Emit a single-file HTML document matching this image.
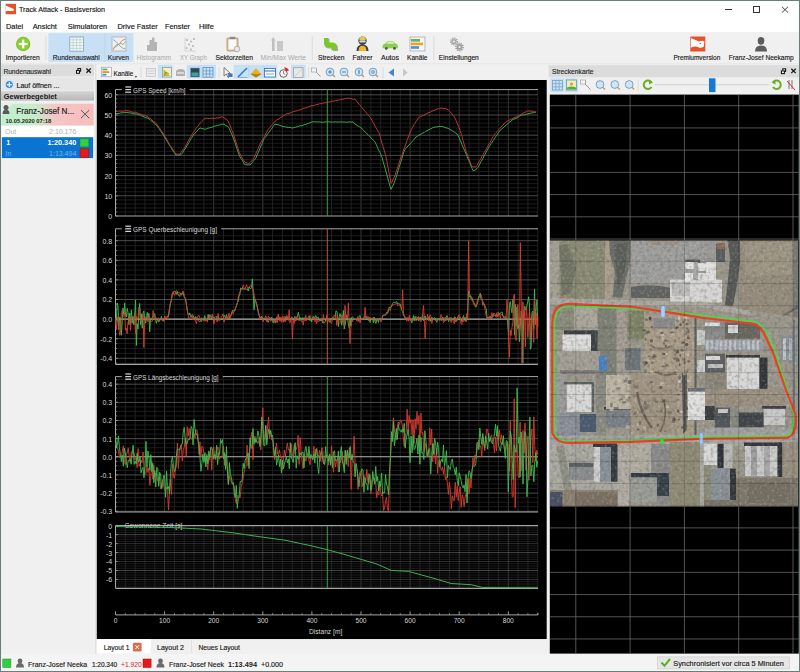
<!DOCTYPE html>
<html><head><meta charset="utf-8"><title>Track Attack</title>
<style>html,body{margin:0;padding:0;background:#f0f0f0;overflow:hidden}svg{display:block}text{font-family:"Liberation Sans",sans-serif}.dk{stroke:#1a1a1a;stroke-width:0.18px}</style>
</head><body>
<svg width="800" height="672" viewBox="0 0 800 672" font-family="Liberation Sans, sans-serif">
<rect x="0.00" y="0.00" width="800.00" height="672.00" fill="#f0f0f0" />
<rect x="0.00" y="0.00" width="800.00" height="32.30" fill="#ffffff" />
<rect x="5.6" y="3.8" width="10.4" height="10.4" fill="#ea5028"/><path d="M5.6,5.4 L12.8,8.6 Q14.6,9.3 14,10.4 Q11.5,11.3 9.2,10.9 Q7.2,10.6 5.6,11.4 Z" fill="#ffffff"/>
<text x="19.00" y="12.30" font-size="7.8" fill="#1a1a1a" textLength="86" lengthAdjust="spacingAndGlyphs" class="dk">Track Attack - Basisversion</text>
<line x1="725.00" y1="9.50" x2="732.00" y2="9.50" stroke="#333" stroke-width="1" />
<rect x="753.50" y="6.50" width="6.00" height="6.00" fill="none" stroke="#333" stroke-width="1"/>
<line x1="782.00" y1="6.80" x2="788.00" y2="12.60" stroke="#333" stroke-width="0.9" />
<line x1="788.00" y1="6.80" x2="782.00" y2="12.60" stroke="#333" stroke-width="0.9" />
<text x="6.00" y="28.80" font-size="7.4" fill="#1a1a1a" class="dk">Datei</text>
<text x="32.70" y="28.80" font-size="7.4" fill="#1a1a1a" class="dk">Ansicht</text>
<text x="67.80" y="28.80" font-size="7.4" fill="#1a1a1a" class="dk">Simulatoren</text>
<text x="117.50" y="28.80" font-size="7.4" fill="#1a1a1a" class="dk">Drive Faster</text>
<text x="165.00" y="28.80" font-size="7.4" fill="#1a1a1a" class="dk">Fenster</text>
<text x="199.00" y="28.80" font-size="7.4" fill="#1a1a1a" class="dk">Hilfe</text>
<rect x="1.00" y="32.30" width="798.00" height="31.50" fill="#f0f0f0" />
<rect x="1.00" y="63.30" width="798.00" height="1.00" fill="#e6e6e6" />
<rect x="48.40" y="33.10" width="56.20" height="28.80" fill="#c8e0f6" />
<rect x="105.20" y="33.10" width="28.20" height="28.80" fill="#c8e0f6" />
<line x1="104.90" y1="33.10" x2="104.90" y2="61.90" stroke="#a9cdef" stroke-width="0.8" />
<line x1="45.90" y1="36.00" x2="45.90" y2="60.00" stroke="#d8d8d8" stroke-width="0.8" />
<line x1="312.30" y1="36.00" x2="312.30" y2="60.00" stroke="#d8d8d8" stroke-width="0.8" />
<line x1="433.80" y1="36.00" x2="433.80" y2="60.00" stroke="#d8d8d8" stroke-width="0.8" />
<text x="5.70" y="59.8" font-size="7" fill="#1e1e1e" stroke="#1e1e1e" stroke-width="0.16" textLength="34.2" lengthAdjust="spacingAndGlyphs">Importieren</text>
<text x="52.80" y="59.8" font-size="7" fill="#1e1e1e" stroke="#1e1e1e" stroke-width="0.16" textLength="46.9" lengthAdjust="spacingAndGlyphs">Rundenauswahl</text>
<text x="107.80" y="59.8" font-size="7" fill="#1e1e1e" stroke="#1e1e1e" stroke-width="0.16" textLength="21.2" lengthAdjust="spacingAndGlyphs">Kurven</text>
<text x="136.80" y="59.8" font-size="7" fill="#a8a8a8" textLength="34.3" lengthAdjust="spacingAndGlyphs">Histogramm</text>
<text x="180.00" y="59.8" font-size="7" fill="#a8a8a8" textLength="26.8" lengthAdjust="spacingAndGlyphs">XY Graph</text>
<text x="215.50" y="59.8" font-size="7" fill="#1e1e1e" stroke="#1e1e1e" stroke-width="0.16" textLength="37.5" lengthAdjust="spacingAndGlyphs">Sektorzeiten</text>
<text x="260.50" y="59.8" font-size="7" fill="#a8a8a8" textLength="45.5" lengthAdjust="spacingAndGlyphs">Min/Max Werte</text>
<text x="318.00" y="59.8" font-size="7" fill="#1e1e1e" stroke="#1e1e1e" stroke-width="0.16" textLength="26.5" lengthAdjust="spacingAndGlyphs">Strecken</text>
<text x="352.50" y="59.8" font-size="7" fill="#1e1e1e" stroke="#1e1e1e" stroke-width="0.16" textLength="20.0" lengthAdjust="spacingAndGlyphs">Fahrer</text>
<text x="381.00" y="59.8" font-size="7" fill="#1e1e1e" stroke="#1e1e1e" stroke-width="0.16" textLength="18.0" lengthAdjust="spacingAndGlyphs">Autos</text>
<text x="407.00" y="59.8" font-size="7" fill="#1e1e1e" stroke="#1e1e1e" stroke-width="0.16" textLength="20.5" lengthAdjust="spacingAndGlyphs">Kanäle</text>
<text x="438.80" y="59.8" font-size="7" fill="#1e1e1e" stroke="#1e1e1e" stroke-width="0.16" textLength="40.0" lengthAdjust="spacingAndGlyphs">Einstellungen</text>
<text x="673.40" y="59.8" font-size="7" fill="#1e1e1e" stroke="#1e1e1e" stroke-width="0.16" textLength="46.9" lengthAdjust="spacingAndGlyphs">Premiumversion</text>
<text x="728.80" y="59.8" font-size="7" fill="#1e1e1e" stroke="#1e1e1e" stroke-width="0.16" textLength="64.8" lengthAdjust="spacingAndGlyphs">Franz-Josef Neekamp</text>
<circle cx="23.2" cy="44" r="7.2" fill="#7cbf2a"/><circle cx="23.2" cy="44" r="6.2" fill="#8ccc35"/>
<rect x="22.1" y="39.6" width="2.2" height="8.8" fill="#fff"/><rect x="18.8" y="42.9" width="8.8" height="2.2" fill="#fff"/>
<rect x="69.8" y="37" width="13.6" height="14.2" fill="#f4f8fb" stroke="#7f9fb8" stroke-width="0.8"/>
<line x1="69.80" y1="39.84" x2="83.40" y2="39.84" stroke="#9fc2a0" stroke-width="0.5" />
<line x1="69.80" y1="42.68" x2="83.40" y2="42.68" stroke="#9fc2a0" stroke-width="0.5" />
<line x1="69.80" y1="45.52" x2="83.40" y2="45.52" stroke="#9fc2a0" stroke-width="0.5" />
<line x1="69.80" y1="48.36" x2="83.40" y2="48.36" stroke="#9fc2a0" stroke-width="0.5" />
<line x1="73.20" y1="37.00" x2="73.20" y2="51.20" stroke="#9fb8c8" stroke-width="0.5" />
<line x1="76.60" y1="37.00" x2="76.60" y2="51.20" stroke="#9fb8c8" stroke-width="0.5" />
<line x1="80.00" y1="37.00" x2="80.00" y2="51.20" stroke="#9fb8c8" stroke-width="0.5" />
<rect x="112" y="37" width="14" height="14" fill="#f2eeee" stroke="#a8b0b8" stroke-width="0.8"/>
<polyline points="112.8,50 116,45 119,44.5 122,40.5 125.5,39" fill="none" stroke="#e07a6a" stroke-width="0.9"/>
<polyline points="113,39.5 116.5,42 119.5,45.5 122.5,48 125.5,49" fill="none" stroke="#6a9ad0" stroke-width="0.8"/>
<polyline points="113,48.5 117,46 120,43 123,44.5 125.5,41.5" fill="none" stroke="#70b868" stroke-width="0.8"/>
<path d="M147,51 V45 H149.5 V40 H152 V37.5 H154.5 V42 H157 V51 Z" fill="#b4b4b4"/>
<rect x="186.1" y="39.1" width="1.8" height="1.8" fill="#b8b8b8"/>
<rect x="190.1" y="40.6" width="1.8" height="1.8" fill="#b8b8b8"/>
<rect x="188.1" y="43.6" width="1.8" height="1.8" fill="#b8b8b8"/>
<rect x="192.1" y="45.1" width="1.8" height="1.8" fill="#b8b8b8"/>
<rect x="185.6" y="47.1" width="1.8" height="1.8" fill="#b8b8b8"/>
<rect x="190.1" y="48.6" width="1.8" height="1.8" fill="#b8b8b8"/>
<rect x="193.1" y="38.1" width="1.8" height="1.8" fill="#b8b8b8"/>
<path d="M185,37.5 V51 H196" fill="none" stroke="#c8c8c8" stroke-width="0.7"/>
<rect x="227" y="38" width="11" height="13" rx="1" fill="#d8c0a0" stroke="#a88860" stroke-width="0.7"/>
<rect x="228.5" y="39.5" width="8" height="10" fill="#f8f8f8"/>
<rect x="229.8" y="36.8" width="5.4" height="2.2" fill="#8a8a8a"/>
<circle cx="237" cy="49" r="2.8" fill="#e8e8e8" stroke="#9a9a9a" stroke-width="0.7"/>
<path d="M272,51 V40 L270,42 L273.3,37 L276.5,42 L274.6,40 V51 Z" fill="#c0c0c0"/><rect x="277" y="41" width="6" height="10" fill="#c8c8c8"/>
<path d="M325,39 h4.5 v4.5 h3.5 q5,0 5,5 v2.5 h-5.5 v-2.5 h-3 q-4.5,0 -4.5,-4.5 z" fill="#8a8a8a" opacity="0.7"/>
<path d="M324,38 h4.5 v4.5 h3.5 q5,0 5,5 v2.5 h-5.5 v-2.5 h-3 q-4.5,0 -4.5,-4.5 z" fill="#78c828"/>
<path d="M356.5,51 q0,-6.5 6,-6.5 q6,0 6,6.5 z" fill="#3e3e3e"/><path d="M358.6,51 q0,-5.2 3.9,-5.2 q3.9,0 3.9,5.2 z" fill="#e8b830"/>
<circle cx="362.5" cy="40.8" r="4.2" fill="#404040"/><path d="M359.2,40 q0,-3.4 3.3,-3.6 q3.3,0.2 3.3,3.6 z" fill="#f0c848"/><rect x="359.3" y="40.2" width="6.4" height="2.4" rx="1" fill="#c8d8f0"/>
<path d="M382.5,46.5 q0,-2.5 2.5,-2.7 l2.5,-2.6 h5.5 l2.8,2.6 q2.2,0.3 2.2,2.7 v1.8 h-15.5 z" fill="#8ccc50"/>
<path d="M388,41.7 h4.8 l2,2 h-8.6 z" fill="#d8f0c0"/>
<circle cx="386.3" cy="48.4" r="1.4" fill="#555"/><circle cx="394.5" cy="48.4" r="1.4" fill="#555"/>
<rect x="410" y="37" width="15" height="14" fill="#f4f4f4" stroke="#9aa0a8" stroke-width="0.7"/>
<rect x="411" y="39" width="9" height="2.6" fill="#70b050"/><rect x="411" y="42.6" width="12" height="2.6" fill="#f0a030"/><rect x="411" y="46.2" width="8" height="2.6" fill="#4a90d0"/>
<circle cx="454" cy="41.5" r="3.3" fill="none" stroke="#a4a4a4" stroke-width="1.6" stroke-dasharray="1.3,0.9"/><circle cx="454" cy="41.5" r="2.6" fill="#a8a8a8"/><circle cx="454" cy="41.5" r="1" fill="#f0f0f0"/>
<circle cx="459.5" cy="47" r="3.6" fill="none" stroke="#9c9c9c" stroke-width="1.6" stroke-dasharray="1.3,0.9"/><circle cx="459.5" cy="47" r="2.9" fill="#a0a0a0"/><circle cx="459.5" cy="47" r="1.1" fill="#f0f0f0"/>
<rect x="690.3" y="36.5" width="15" height="15" fill="#e8522a"/>
<path d="M690.9,37.9 L699,41.5 Q702,40 704.4,41.2 L703.7,46.8 Q701,48.5 699,47.5 Q696,45.8 693,46.8 L690.9,47.8 Z" fill="#fff"/><circle cx="700.2" cy="43.4" r="0.7" fill="#6a5a7a"/>
<ellipse cx="761" cy="40.8" rx="3.3" ry="3.9" fill="#5c5c5c"/><path d="M755,51.5 q0,-6 6,-6 q6,0 6,6 z" fill="#5c5c5c"/>
<rect x="1.00" y="64.50" width="93.00" height="12.00" fill="#dcdcdc" />
<text x="3.40" y="74.00" font-size="6.8" fill="#2a2a2a" stroke="#2a2a2a" stroke-width="0.16" textLength="47.6" lengthAdjust="spacingAndGlyphs">Rundenauswahl</text>
<path d="M77.9,70.3 V68.5 H80.6 V71.2 H79.4" fill="none" stroke="#1a1a1a" stroke-width="1.1"/><rect x="76.5" y="70.6" width="3" height="2.7" fill="#fff" stroke="#1a1a1a" stroke-width="1.1"/>
<line x1="86.40" y1="68.50" x2="90.80" y2="72.80" stroke="#1a1a1a" stroke-width="1.3" />
<line x1="90.80" y1="68.50" x2="86.40" y2="72.80" stroke="#1a1a1a" stroke-width="1.3" />
<rect x="1.50" y="77.50" width="92.00" height="13.00" fill="#e6e6e6" />
<circle cx="9.3" cy="84.6" r="4.6" fill="#cfe8fb"/><circle cx="9.3" cy="84.6" r="3.5" fill="#3f8fd6"/>
<rect x="8.7" y="82.2" width="1.3" height="4.8" fill="#e8f4ff"/><rect x="6.9" y="84" width="4.8" height="1.3" fill="#e8f4ff"/>
<text x="16.50" y="88.30" font-size="7" fill="#1a1a1a" stroke="#1a1a1a" stroke-width="0.16" textLength="43" lengthAdjust="spacingAndGlyphs">Lauf öffnen ...</text>
<defs><linearGradient id="gg" x1="0" y1="0" x2="0" y2="1"><stop offset="0" stop-color="#d4d4d4"/><stop offset="1" stop-color="#b8b8b8"/></linearGradient><linearGradient id="card" x1="0" y1="0" x2="1" y2="0"><stop offset="0" stop-color="#c0efcf"/><stop offset="0.36" stop-color="#c8eccc"/><stop offset="0.58" stop-color="#f5c6c6"/><stop offset="1" stop-color="#f6bcbc"/></linearGradient></defs>
<rect x="1.00" y="91.20" width="93.00" height="9.40" fill="url(#gg)" />
<text x="3.80" y="98.80" font-size="7" font-weight="bold" fill="#1a1a1a" textLength="53" lengthAdjust="spacingAndGlyphs">Gewerbegebiet</text>
<rect x="1.50" y="103.70" width="92.20" height="22.00" fill="url(#card)" />
<path d="M1.5,103.7 H12.8 L1.5,115.5 Z" fill="#ececec"/>
<circle cx="6" cy="107.6" r="2.5" fill="#5a5a5a"/><path d="M2.5,114 q0,-4.5 3.5,-4.5 q3.5,0 3.5,4.5 z" fill="#5a5a5a"/>
<text x="16.30" y="113.80" font-size="8.6" fill="#1a1a1a" stroke="#1a1a1a" stroke-width="0.16" textLength="58" lengthAdjust="spacingAndGlyphs">Franz-Josef N...</text>
<text x="5.60" y="122.80" font-size="6" font-weight="bold" fill="#1a2a10" textLength="45.6" lengthAdjust="spacingAndGlyphs">10.05.2020 07:18</text>
<line x1="81.00" y1="110.20" x2="89.20" y2="118.20" stroke="#444" stroke-width="0.9" />
<line x1="89.20" y1="110.20" x2="81.00" y2="118.20" stroke="#444" stroke-width="0.9" />
<rect x="1.50" y="125.70" width="92.00" height="11.50" fill="#ffffff" />
<text x="5.00" y="134.40" font-size="7" fill="#b0b0b0" >Out</text>
<text x="76.30" y="134.40" font-size="7" text-anchor="end" fill="#b0b0b0" >2:10.176</text>
<rect x="1.90" y="137.20" width="91.20" height="20.90" fill="#0a74d0" />
<text x="6.20" y="145.00" font-size="7.2" font-weight="bold" fill="#ffffff" >1</text>
<text x="76.30" y="145.00" font-size="7.3" font-weight="bold" text-anchor="end" fill="#ffffff" >1:20.340</text>
<text x="5.60" y="155.60" font-size="7" fill="#7ab4e8" >In</text>
<text x="76.30" y="155.60" font-size="7" text-anchor="end" fill="#7ab4e8" >1:13.494</text>
<rect x="80.00" y="138.80" width="8.80" height="8.10" fill="#30d040" stroke="#1a8a20" stroke-width="0.5"/>
<rect x="80.00" y="148.80" width="8.80" height="8.70" fill="#e81818" stroke="#901010" stroke-width="0.5"/>
<line x1="95.80" y1="64.00" x2="95.80" y2="654.00" stroke="#d8d8d8" stroke-width="0.8" />
<rect x="96.50" y="64.50" width="451.00" height="15.50" fill="#f0f0f0" />
<rect x="158.00" y="64.80" width="14.60" height="13.50" fill="#c6e0f6" />
<rect x="186.70" y="64.80" width="29.20" height="13.50" fill="#c6e0f6" />
<rect x="233.60" y="64.80" width="43.40" height="13.50" fill="#c6e0f6" />
<rect x="291.00" y="64.80" width="14.60" height="13.50" fill="#c6e0f6" />
<line x1="201.20" y1="65.00" x2="201.20" y2="78.00" stroke="#b4d4f0" stroke-width="0.6" />
<line x1="248.50" y1="65.00" x2="248.50" y2="78.00" stroke="#b4d4f0" stroke-width="0.6" />
<line x1="263.50" y1="65.00" x2="263.50" y2="78.00" stroke="#b4d4f0" stroke-width="0.6" />
<line x1="141.00" y1="67.00" x2="141.00" y2="78.00" stroke="#d6d6d6" stroke-width="0.8" />
<line x1="219.00" y1="67.00" x2="219.00" y2="78.00" stroke="#d6d6d6" stroke-width="0.8" />
<line x1="308.60" y1="67.00" x2="308.60" y2="78.00" stroke="#d6d6d6" stroke-width="0.8" />
<line x1="383.00" y1="67.00" x2="383.00" y2="78.00" stroke="#d6d6d6" stroke-width="0.8" />
<rect x="101.5" y="67.2" width="10" height="9.6" fill="#f8f8f8" stroke="#8a96a0" stroke-width="0.6"/>
<rect x="102.4" y="68.6" width="5" height="1.8" fill="#68b048"/><rect x="102.4" y="71.2" width="6.8" height="1.8" fill="#e89030"/><rect x="102.4" y="73.8" width="4" height="1.8" fill="#4a90d0"/>
<text x="113.60" y="75.80" font-size="7" fill="#1e1e1e" stroke="#1e1e1e" stroke-width="0.16" textLength="19.6" lengthAdjust="spacingAndGlyphs">Kanäle</text>
<path d="M134.6,76.2 h2.6 l-1.3,1.5 z" fill="#222"/>
<rect x="146.5" y="68.5" width="9" height="8" fill="#eaeaea" stroke="#b8b8b8" stroke-width="0.6"/><line x1="148" y1="71" x2="154" y2="71" stroke="#c0c0c0" stroke-width="0.6"/><line x1="148" y1="73.5" x2="154" y2="73.5" stroke="#c0c0c0" stroke-width="0.6"/>
<rect x="162.5" y="67.5" width="9" height="9.5" fill="#f4f0c0" stroke="#6a8aa0" stroke-width="0.6"/><path d="M163.5,76 V69 L170,76 Z" fill="#d8b820"/><path d="M164,76 L166,72 L169,74" fill="none" stroke="#308030" stroke-width="0.6"/>
<path d="M176,76 v-4 q0,-3 4.5,-3 q4.5,0 4.5,3 v4 z" fill="#b0b0b0"/><rect x="177" y="72" width="7" height="2" fill="#d8d8d8"/>
<rect x="190.5" y="68" width="9" height="9" fill="#2a4a5a" stroke="#7a9ab0" stroke-width="0.6"/><rect x="191.5" y="72.5" width="7" height="3.5" fill="#40a0a0"/>
<rect x="203" y="67.6" width="10" height="9.6" fill="none" stroke="#5a8ab8" stroke-width="0.7"/>
<line x1="206.33" y1="67.60" x2="206.33" y2="77.20" stroke="#5a8ab8" stroke-width="0.6" />
<line x1="203.00" y1="70.80" x2="213.00" y2="70.80" stroke="#5a8ab8" stroke-width="0.6" />
<line x1="209.66" y1="67.60" x2="209.66" y2="77.20" stroke="#5a8ab8" stroke-width="0.6" />
<line x1="203.00" y1="74.00" x2="213.00" y2="74.00" stroke="#5a8ab8" stroke-width="0.6" />
<path d="M224,67.5 L224,76 L226.3,74 L228,77.5 L229.3,77 L227.8,73.5 L230.5,73.5 Z" fill="#f0f0f0" stroke="#333" stroke-width="0.6"/><rect x="228.5" y="73.5" width="4" height="3.5" fill="#3a78c0"/>
<path d="M238,77 L247,68" stroke="#2a78d0" stroke-width="1.4"/><path d="M237.5,77.5 h10" stroke="#6aa0d8" stroke-width="0.7"/>
<path d="M250.5,74 L256,68.2 L261.5,74 L256,77.5 Z" fill="#e8b020"/><path d="M250.5,74 L256,77.5 L261.5,74" fill="#b88010"/>
<rect x="264.5" y="68.5" width="11" height="8.5" fill="#ffffff" stroke="#2a68b8" stroke-width="0.8"/><line x1="264.5" y1="71" x2="275.5" y2="71" stroke="#2a68b8" stroke-width="1"/><line x1="266" y1="74" x2="274" y2="74" stroke="#2a68b8" stroke-width="0.6"/>
<circle cx="283.5" cy="73.5" r="3.8" fill="#f4f4f4" stroke="#444" stroke-width="0.8"/><path d="M283.5,71 V73.5 L285.5,74.5" fill="none" stroke="#444" stroke-width="0.6"/><path d="M284,67.5 q3.5,-0.5 5,3 l-3,1 z" fill="#d83030"/>
<rect x="293.5" y="67.8" width="9.5" height="9.5" fill="#e8e8e8" stroke="#8a8a8a" stroke-width="0.6"/><path d="M294.5,76.5 L302,69" stroke="#bbb" stroke-width="0.6"/>
<path d="M312,68.5 h4.5 v4 l4,4" fill="none" stroke="#777" stroke-width="0.7"/><rect x="311.5" y="68" width="5" height="4" fill="#f4f4f4" stroke="#888" stroke-width="0.5"/>
<circle cx="330" cy="72" r="3.9" fill="#cfe6f8" stroke="#4a84b8" stroke-width="0.7"/><path d="M332.6,74.6 l2.4,2.4" stroke="#d89030" stroke-width="1.3"/>
<path d="M328,72 h4 M330,70 v4" stroke="#2a5a90" stroke-width="0.7"/>
<circle cx="344" cy="72" r="3.9" fill="#cfe6f8" stroke="#4a84b8" stroke-width="0.7"/><path d="M346.6,74.6 l2.4,2.4" stroke="#d89030" stroke-width="1.3"/>
<path d="M342,72 h4" stroke="#2a5a90" stroke-width="0.7"/>
<circle cx="359" cy="72" r="3.9" fill="#cfe6f8" stroke="#4a84b8" stroke-width="0.7"/><path d="M361.6,74.6 l2.4,2.4" stroke="#d89030" stroke-width="1.3"/>
<path d="M359,69.8 v4.4" stroke="#2a5a90" stroke-width="0.9"/>
<circle cx="373" cy="72" r="3.9" fill="#cfe6f8" stroke="#4a84b8" stroke-width="0.7"/><path d="M375.6,74.6 l2.4,2.4" stroke="#d89030" stroke-width="1.3"/>
<circle cx="373" cy="72" r="1.4" fill="none" stroke="#2a5a90" stroke-width="0.6"/>
<path d="M394,68.5 v8 l-5.5,-4 z" fill="#3a88d8"/><path d="M403,68.5 v8 l4.8,-4 z" fill="#c8c8c8"/>
<rect x="96.80" y="80.00" width="449.90" height="559.20" fill="#000000" />
<line x1="125.32" y1="89.60" x2="125.32" y2="216.00" stroke="#2e2e2e" stroke-width="0.7" />
<line x1="135.14" y1="89.60" x2="135.14" y2="216.00" stroke="#2e2e2e" stroke-width="0.7" />
<line x1="144.96" y1="89.60" x2="144.96" y2="216.00" stroke="#2e2e2e" stroke-width="0.7" />
<line x1="154.78" y1="89.60" x2="154.78" y2="216.00" stroke="#2e2e2e" stroke-width="0.7" />
<line x1="164.60" y1="89.60" x2="164.60" y2="216.00" stroke="#484848" stroke-width="0.8" />
<line x1="174.42" y1="89.60" x2="174.42" y2="216.00" stroke="#2e2e2e" stroke-width="0.7" />
<line x1="184.24" y1="89.60" x2="184.24" y2="216.00" stroke="#2e2e2e" stroke-width="0.7" />
<line x1="194.06" y1="89.60" x2="194.06" y2="216.00" stroke="#2e2e2e" stroke-width="0.7" />
<line x1="203.88" y1="89.60" x2="203.88" y2="216.00" stroke="#2e2e2e" stroke-width="0.7" />
<line x1="213.70" y1="89.60" x2="213.70" y2="216.00" stroke="#484848" stroke-width="0.8" />
<line x1="223.52" y1="89.60" x2="223.52" y2="216.00" stroke="#2e2e2e" stroke-width="0.7" />
<line x1="233.34" y1="89.60" x2="233.34" y2="216.00" stroke="#2e2e2e" stroke-width="0.7" />
<line x1="243.16" y1="89.60" x2="243.16" y2="216.00" stroke="#2e2e2e" stroke-width="0.7" />
<line x1="252.98" y1="89.60" x2="252.98" y2="216.00" stroke="#2e2e2e" stroke-width="0.7" />
<line x1="262.80" y1="89.60" x2="262.80" y2="216.00" stroke="#484848" stroke-width="0.8" />
<line x1="272.62" y1="89.60" x2="272.62" y2="216.00" stroke="#2e2e2e" stroke-width="0.7" />
<line x1="282.44" y1="89.60" x2="282.44" y2="216.00" stroke="#2e2e2e" stroke-width="0.7" />
<line x1="292.26" y1="89.60" x2="292.26" y2="216.00" stroke="#2e2e2e" stroke-width="0.7" />
<line x1="302.08" y1="89.60" x2="302.08" y2="216.00" stroke="#2e2e2e" stroke-width="0.7" />
<line x1="311.90" y1="89.60" x2="311.90" y2="216.00" stroke="#484848" stroke-width="0.8" />
<line x1="321.72" y1="89.60" x2="321.72" y2="216.00" stroke="#2e2e2e" stroke-width="0.7" />
<line x1="331.54" y1="89.60" x2="331.54" y2="216.00" stroke="#2e2e2e" stroke-width="0.7" />
<line x1="341.36" y1="89.60" x2="341.36" y2="216.00" stroke="#2e2e2e" stroke-width="0.7" />
<line x1="351.18" y1="89.60" x2="351.18" y2="216.00" stroke="#2e2e2e" stroke-width="0.7" />
<line x1="361.00" y1="89.60" x2="361.00" y2="216.00" stroke="#484848" stroke-width="0.8" />
<line x1="370.82" y1="89.60" x2="370.82" y2="216.00" stroke="#2e2e2e" stroke-width="0.7" />
<line x1="380.64" y1="89.60" x2="380.64" y2="216.00" stroke="#2e2e2e" stroke-width="0.7" />
<line x1="390.46" y1="89.60" x2="390.46" y2="216.00" stroke="#2e2e2e" stroke-width="0.7" />
<line x1="400.28" y1="89.60" x2="400.28" y2="216.00" stroke="#2e2e2e" stroke-width="0.7" />
<line x1="410.10" y1="89.60" x2="410.10" y2="216.00" stroke="#484848" stroke-width="0.8" />
<line x1="419.92" y1="89.60" x2="419.92" y2="216.00" stroke="#2e2e2e" stroke-width="0.7" />
<line x1="429.74" y1="89.60" x2="429.74" y2="216.00" stroke="#2e2e2e" stroke-width="0.7" />
<line x1="439.56" y1="89.60" x2="439.56" y2="216.00" stroke="#2e2e2e" stroke-width="0.7" />
<line x1="449.38" y1="89.60" x2="449.38" y2="216.00" stroke="#2e2e2e" stroke-width="0.7" />
<line x1="459.20" y1="89.60" x2="459.20" y2="216.00" stroke="#484848" stroke-width="0.8" />
<line x1="469.02" y1="89.60" x2="469.02" y2="216.00" stroke="#2e2e2e" stroke-width="0.7" />
<line x1="478.84" y1="89.60" x2="478.84" y2="216.00" stroke="#2e2e2e" stroke-width="0.7" />
<line x1="488.66" y1="89.60" x2="488.66" y2="216.00" stroke="#2e2e2e" stroke-width="0.7" />
<line x1="498.48" y1="89.60" x2="498.48" y2="216.00" stroke="#2e2e2e" stroke-width="0.7" />
<line x1="508.30" y1="89.60" x2="508.30" y2="216.00" stroke="#484848" stroke-width="0.8" />
<line x1="518.12" y1="89.60" x2="518.12" y2="216.00" stroke="#2e2e2e" stroke-width="0.7" />
<line x1="527.94" y1="89.60" x2="527.94" y2="216.00" stroke="#2e2e2e" stroke-width="0.7" />
<line x1="537.76" y1="89.60" x2="537.76" y2="216.00" stroke="#2e2e2e" stroke-width="0.7" />
<line x1="115.50" y1="211.96" x2="538.00" y2="211.96" stroke="#282828" stroke-width="0.7" />
<line x1="115.50" y1="207.92" x2="538.00" y2="207.92" stroke="#282828" stroke-width="0.7" />
<line x1="115.50" y1="203.88" x2="538.00" y2="203.88" stroke="#282828" stroke-width="0.7" />
<line x1="115.50" y1="199.84" x2="538.00" y2="199.84" stroke="#282828" stroke-width="0.7" />
<line x1="115.50" y1="191.76" x2="538.00" y2="191.76" stroke="#282828" stroke-width="0.7" />
<line x1="115.50" y1="187.72" x2="538.00" y2="187.72" stroke="#282828" stroke-width="0.7" />
<line x1="115.50" y1="183.68" x2="538.00" y2="183.68" stroke="#282828" stroke-width="0.7" />
<line x1="115.50" y1="179.64" x2="538.00" y2="179.64" stroke="#282828" stroke-width="0.7" />
<line x1="115.50" y1="171.56" x2="538.00" y2="171.56" stroke="#282828" stroke-width="0.7" />
<line x1="115.50" y1="167.52" x2="538.00" y2="167.52" stroke="#282828" stroke-width="0.7" />
<line x1="115.50" y1="163.48" x2="538.00" y2="163.48" stroke="#282828" stroke-width="0.7" />
<line x1="115.50" y1="159.44" x2="538.00" y2="159.44" stroke="#282828" stroke-width="0.7" />
<line x1="115.50" y1="151.36" x2="538.00" y2="151.36" stroke="#282828" stroke-width="0.7" />
<line x1="115.50" y1="147.32" x2="538.00" y2="147.32" stroke="#282828" stroke-width="0.7" />
<line x1="115.50" y1="143.28" x2="538.00" y2="143.28" stroke="#282828" stroke-width="0.7" />
<line x1="115.50" y1="139.24" x2="538.00" y2="139.24" stroke="#282828" stroke-width="0.7" />
<line x1="115.50" y1="131.16" x2="538.00" y2="131.16" stroke="#282828" stroke-width="0.7" />
<line x1="115.50" y1="127.12" x2="538.00" y2="127.12" stroke="#282828" stroke-width="0.7" />
<line x1="115.50" y1="123.08" x2="538.00" y2="123.08" stroke="#282828" stroke-width="0.7" />
<line x1="115.50" y1="119.04" x2="538.00" y2="119.04" stroke="#282828" stroke-width="0.7" />
<line x1="115.50" y1="110.96" x2="538.00" y2="110.96" stroke="#282828" stroke-width="0.7" />
<line x1="115.50" y1="106.92" x2="538.00" y2="106.92" stroke="#282828" stroke-width="0.7" />
<line x1="115.50" y1="102.88" x2="538.00" y2="102.88" stroke="#282828" stroke-width="0.7" />
<line x1="115.50" y1="98.84" x2="538.00" y2="98.84" stroke="#282828" stroke-width="0.7" />
<line x1="115.50" y1="195.80" x2="538.00" y2="195.80" stroke="#606060" stroke-width="0.8" />
<line x1="115.50" y1="175.60" x2="538.00" y2="175.60" stroke="#606060" stroke-width="0.8" />
<line x1="115.50" y1="155.40" x2="538.00" y2="155.40" stroke="#606060" stroke-width="0.8" />
<line x1="115.50" y1="135.20" x2="538.00" y2="135.20" stroke="#606060" stroke-width="0.8" />
<line x1="115.50" y1="115.00" x2="538.00" y2="115.00" stroke="#606060" stroke-width="0.8" />
<line x1="115.50" y1="94.80" x2="538.00" y2="94.80" stroke="#606060" stroke-width="0.8" />
<text x="112.20" y="218.90" font-size="7" text-anchor="end" fill="#d8d8d8" >0</text>
<line x1="115.50" y1="216.00" x2="117.70" y2="216.00" stroke="#a8a8a8" stroke-width="0.8" />
<text x="112.20" y="198.70" font-size="7" text-anchor="end" fill="#d8d8d8" >10</text>
<line x1="115.50" y1="195.80" x2="117.70" y2="195.80" stroke="#a8a8a8" stroke-width="0.8" />
<text x="112.20" y="178.50" font-size="7" text-anchor="end" fill="#d8d8d8" >20</text>
<line x1="115.50" y1="175.60" x2="117.70" y2="175.60" stroke="#a8a8a8" stroke-width="0.8" />
<text x="112.20" y="158.30" font-size="7" text-anchor="end" fill="#d8d8d8" >30</text>
<line x1="115.50" y1="155.40" x2="117.70" y2="155.40" stroke="#a8a8a8" stroke-width="0.8" />
<text x="112.20" y="138.10" font-size="7" text-anchor="end" fill="#d8d8d8" >40</text>
<line x1="115.50" y1="135.20" x2="117.70" y2="135.20" stroke="#a8a8a8" stroke-width="0.8" />
<text x="112.20" y="117.90" font-size="7" text-anchor="end" fill="#d8d8d8" >50</text>
<line x1="115.50" y1="115.00" x2="117.70" y2="115.00" stroke="#a8a8a8" stroke-width="0.8" />
<text x="112.20" y="97.70" font-size="7" text-anchor="end" fill="#d8d8d8" >60</text>
<line x1="115.50" y1="94.80" x2="117.70" y2="94.80" stroke="#a8a8a8" stroke-width="0.8" />
<line x1="115.50" y1="211.96" x2="117.00" y2="211.96" stroke="#a8a8a8" stroke-width="0.6" />
<line x1="115.50" y1="207.92" x2="117.00" y2="207.92" stroke="#a8a8a8" stroke-width="0.6" />
<line x1="115.50" y1="203.88" x2="117.00" y2="203.88" stroke="#a8a8a8" stroke-width="0.6" />
<line x1="115.50" y1="199.84" x2="117.00" y2="199.84" stroke="#a8a8a8" stroke-width="0.6" />
<line x1="115.50" y1="191.76" x2="117.00" y2="191.76" stroke="#a8a8a8" stroke-width="0.6" />
<line x1="115.50" y1="187.72" x2="117.00" y2="187.72" stroke="#a8a8a8" stroke-width="0.6" />
<line x1="115.50" y1="183.68" x2="117.00" y2="183.68" stroke="#a8a8a8" stroke-width="0.6" />
<line x1="115.50" y1="179.64" x2="117.00" y2="179.64" stroke="#a8a8a8" stroke-width="0.6" />
<line x1="115.50" y1="171.56" x2="117.00" y2="171.56" stroke="#a8a8a8" stroke-width="0.6" />
<line x1="115.50" y1="167.52" x2="117.00" y2="167.52" stroke="#a8a8a8" stroke-width="0.6" />
<line x1="115.50" y1="163.48" x2="117.00" y2="163.48" stroke="#a8a8a8" stroke-width="0.6" />
<line x1="115.50" y1="159.44" x2="117.00" y2="159.44" stroke="#a8a8a8" stroke-width="0.6" />
<line x1="115.50" y1="151.36" x2="117.00" y2="151.36" stroke="#a8a8a8" stroke-width="0.6" />
<line x1="115.50" y1="147.32" x2="117.00" y2="147.32" stroke="#a8a8a8" stroke-width="0.6" />
<line x1="115.50" y1="143.28" x2="117.00" y2="143.28" stroke="#a8a8a8" stroke-width="0.6" />
<line x1="115.50" y1="139.24" x2="117.00" y2="139.24" stroke="#a8a8a8" stroke-width="0.6" />
<line x1="115.50" y1="131.16" x2="117.00" y2="131.16" stroke="#a8a8a8" stroke-width="0.6" />
<line x1="115.50" y1="127.12" x2="117.00" y2="127.12" stroke="#a8a8a8" stroke-width="0.6" />
<line x1="115.50" y1="123.08" x2="117.00" y2="123.08" stroke="#a8a8a8" stroke-width="0.6" />
<line x1="115.50" y1="119.04" x2="117.00" y2="119.04" stroke="#a8a8a8" stroke-width="0.6" />
<line x1="115.50" y1="110.96" x2="117.00" y2="110.96" stroke="#a8a8a8" stroke-width="0.6" />
<line x1="115.50" y1="106.92" x2="117.00" y2="106.92" stroke="#a8a8a8" stroke-width="0.6" />
<line x1="115.50" y1="102.88" x2="117.00" y2="102.88" stroke="#a8a8a8" stroke-width="0.6" />
<line x1="115.50" y1="98.84" x2="117.00" y2="98.84" stroke="#a8a8a8" stroke-width="0.6" />
<line x1="115.50" y1="89.60" x2="115.50" y2="216.00" stroke="#a8a8a8" stroke-width="1" />
<line x1="115.50" y1="216.00" x2="538.00" y2="216.00" stroke="#a8a8a8" stroke-width="1.2" />
<line x1="115.50" y1="89.60" x2="121.80" y2="89.60" stroke="#a8a8a8" stroke-width="1" />
<line x1="189.70" y1="89.60" x2="538.00" y2="89.60" stroke="#a8a8a8" stroke-width="1" />
<rect x="125.30" y="86.40" width="5.80" height="1.20" fill="#d8d8d8" />
<rect x="125.30" y="89.00" width="5.80" height="1.20" fill="#d8d8d8" />
<rect x="125.30" y="91.60" width="5.80" height="1.20" fill="#d8d8d8" />
<text x="133.00" y="92.50" font-size="6.8" fill="#d8d8d8" textLength="52.5" lengthAdjust="spacingAndGlyphs">GPS Speed [km/h]</text>
<line x1="125.32" y1="228.80" x2="125.32" y2="364.30" stroke="#2e2e2e" stroke-width="0.7" />
<line x1="135.14" y1="228.80" x2="135.14" y2="364.30" stroke="#2e2e2e" stroke-width="0.7" />
<line x1="144.96" y1="228.80" x2="144.96" y2="364.30" stroke="#2e2e2e" stroke-width="0.7" />
<line x1="154.78" y1="228.80" x2="154.78" y2="364.30" stroke="#2e2e2e" stroke-width="0.7" />
<line x1="164.60" y1="228.80" x2="164.60" y2="364.30" stroke="#484848" stroke-width="0.8" />
<line x1="174.42" y1="228.80" x2="174.42" y2="364.30" stroke="#2e2e2e" stroke-width="0.7" />
<line x1="184.24" y1="228.80" x2="184.24" y2="364.30" stroke="#2e2e2e" stroke-width="0.7" />
<line x1="194.06" y1="228.80" x2="194.06" y2="364.30" stroke="#2e2e2e" stroke-width="0.7" />
<line x1="203.88" y1="228.80" x2="203.88" y2="364.30" stroke="#2e2e2e" stroke-width="0.7" />
<line x1="213.70" y1="228.80" x2="213.70" y2="364.30" stroke="#484848" stroke-width="0.8" />
<line x1="223.52" y1="228.80" x2="223.52" y2="364.30" stroke="#2e2e2e" stroke-width="0.7" />
<line x1="233.34" y1="228.80" x2="233.34" y2="364.30" stroke="#2e2e2e" stroke-width="0.7" />
<line x1="243.16" y1="228.80" x2="243.16" y2="364.30" stroke="#2e2e2e" stroke-width="0.7" />
<line x1="252.98" y1="228.80" x2="252.98" y2="364.30" stroke="#2e2e2e" stroke-width="0.7" />
<line x1="262.80" y1="228.80" x2="262.80" y2="364.30" stroke="#484848" stroke-width="0.8" />
<line x1="272.62" y1="228.80" x2="272.62" y2="364.30" stroke="#2e2e2e" stroke-width="0.7" />
<line x1="282.44" y1="228.80" x2="282.44" y2="364.30" stroke="#2e2e2e" stroke-width="0.7" />
<line x1="292.26" y1="228.80" x2="292.26" y2="364.30" stroke="#2e2e2e" stroke-width="0.7" />
<line x1="302.08" y1="228.80" x2="302.08" y2="364.30" stroke="#2e2e2e" stroke-width="0.7" />
<line x1="311.90" y1="228.80" x2="311.90" y2="364.30" stroke="#484848" stroke-width="0.8" />
<line x1="321.72" y1="228.80" x2="321.72" y2="364.30" stroke="#2e2e2e" stroke-width="0.7" />
<line x1="331.54" y1="228.80" x2="331.54" y2="364.30" stroke="#2e2e2e" stroke-width="0.7" />
<line x1="341.36" y1="228.80" x2="341.36" y2="364.30" stroke="#2e2e2e" stroke-width="0.7" />
<line x1="351.18" y1="228.80" x2="351.18" y2="364.30" stroke="#2e2e2e" stroke-width="0.7" />
<line x1="361.00" y1="228.80" x2="361.00" y2="364.30" stroke="#484848" stroke-width="0.8" />
<line x1="370.82" y1="228.80" x2="370.82" y2="364.30" stroke="#2e2e2e" stroke-width="0.7" />
<line x1="380.64" y1="228.80" x2="380.64" y2="364.30" stroke="#2e2e2e" stroke-width="0.7" />
<line x1="390.46" y1="228.80" x2="390.46" y2="364.30" stroke="#2e2e2e" stroke-width="0.7" />
<line x1="400.28" y1="228.80" x2="400.28" y2="364.30" stroke="#2e2e2e" stroke-width="0.7" />
<line x1="410.10" y1="228.80" x2="410.10" y2="364.30" stroke="#484848" stroke-width="0.8" />
<line x1="419.92" y1="228.80" x2="419.92" y2="364.30" stroke="#2e2e2e" stroke-width="0.7" />
<line x1="429.74" y1="228.80" x2="429.74" y2="364.30" stroke="#2e2e2e" stroke-width="0.7" />
<line x1="439.56" y1="228.80" x2="439.56" y2="364.30" stroke="#2e2e2e" stroke-width="0.7" />
<line x1="449.38" y1="228.80" x2="449.38" y2="364.30" stroke="#2e2e2e" stroke-width="0.7" />
<line x1="459.20" y1="228.80" x2="459.20" y2="364.30" stroke="#484848" stroke-width="0.8" />
<line x1="469.02" y1="228.80" x2="469.02" y2="364.30" stroke="#2e2e2e" stroke-width="0.7" />
<line x1="478.84" y1="228.80" x2="478.84" y2="364.30" stroke="#2e2e2e" stroke-width="0.7" />
<line x1="488.66" y1="228.80" x2="488.66" y2="364.30" stroke="#2e2e2e" stroke-width="0.7" />
<line x1="498.48" y1="228.80" x2="498.48" y2="364.30" stroke="#2e2e2e" stroke-width="0.7" />
<line x1="508.30" y1="228.80" x2="508.30" y2="364.30" stroke="#484848" stroke-width="0.8" />
<line x1="518.12" y1="228.80" x2="518.12" y2="364.30" stroke="#2e2e2e" stroke-width="0.7" />
<line x1="527.94" y1="228.80" x2="527.94" y2="364.30" stroke="#2e2e2e" stroke-width="0.7" />
<line x1="537.76" y1="228.80" x2="537.76" y2="364.30" stroke="#2e2e2e" stroke-width="0.7" />
<line x1="115.50" y1="363.20" x2="538.00" y2="363.20" stroke="#282828" stroke-width="0.7" />
<line x1="115.50" y1="353.40" x2="538.00" y2="353.40" stroke="#282828" stroke-width="0.7" />
<line x1="115.50" y1="348.50" x2="538.00" y2="348.50" stroke="#282828" stroke-width="0.7" />
<line x1="115.50" y1="343.60" x2="538.00" y2="343.60" stroke="#282828" stroke-width="0.7" />
<line x1="115.50" y1="333.80" x2="538.00" y2="333.80" stroke="#282828" stroke-width="0.7" />
<line x1="115.50" y1="328.90" x2="538.00" y2="328.90" stroke="#282828" stroke-width="0.7" />
<line x1="115.50" y1="324.00" x2="538.00" y2="324.00" stroke="#282828" stroke-width="0.7" />
<line x1="115.50" y1="314.20" x2="538.00" y2="314.20" stroke="#282828" stroke-width="0.7" />
<line x1="115.50" y1="309.30" x2="538.00" y2="309.30" stroke="#282828" stroke-width="0.7" />
<line x1="115.50" y1="304.40" x2="538.00" y2="304.40" stroke="#282828" stroke-width="0.7" />
<line x1="115.50" y1="294.60" x2="538.00" y2="294.60" stroke="#282828" stroke-width="0.7" />
<line x1="115.50" y1="289.70" x2="538.00" y2="289.70" stroke="#282828" stroke-width="0.7" />
<line x1="115.50" y1="284.80" x2="538.00" y2="284.80" stroke="#282828" stroke-width="0.7" />
<line x1="115.50" y1="275.00" x2="538.00" y2="275.00" stroke="#282828" stroke-width="0.7" />
<line x1="115.50" y1="270.10" x2="538.00" y2="270.10" stroke="#282828" stroke-width="0.7" />
<line x1="115.50" y1="265.20" x2="538.00" y2="265.20" stroke="#282828" stroke-width="0.7" />
<line x1="115.50" y1="255.40" x2="538.00" y2="255.40" stroke="#282828" stroke-width="0.7" />
<line x1="115.50" y1="250.50" x2="538.00" y2="250.50" stroke="#282828" stroke-width="0.7" />
<line x1="115.50" y1="245.60" x2="538.00" y2="245.60" stroke="#282828" stroke-width="0.7" />
<line x1="115.50" y1="235.80" x2="538.00" y2="235.80" stroke="#282828" stroke-width="0.7" />
<line x1="115.50" y1="358.30" x2="538.00" y2="358.30" stroke="#606060" stroke-width="0.8" />
<line x1="115.50" y1="338.70" x2="538.00" y2="338.70" stroke="#606060" stroke-width="0.8" />
<line x1="115.50" y1="299.50" x2="538.00" y2="299.50" stroke="#606060" stroke-width="0.8" />
<line x1="115.50" y1="279.90" x2="538.00" y2="279.90" stroke="#606060" stroke-width="0.8" />
<line x1="115.50" y1="260.30" x2="538.00" y2="260.30" stroke="#606060" stroke-width="0.8" />
<line x1="115.50" y1="240.70" x2="538.00" y2="240.70" stroke="#606060" stroke-width="0.8" />
<text x="112.20" y="361.20" font-size="7" text-anchor="end" fill="#d8d8d8" >-0.4</text>
<line x1="115.50" y1="358.30" x2="117.70" y2="358.30" stroke="#a8a8a8" stroke-width="0.8" />
<text x="112.20" y="341.60" font-size="7" text-anchor="end" fill="#d8d8d8" >-0.2</text>
<line x1="115.50" y1="338.70" x2="117.70" y2="338.70" stroke="#a8a8a8" stroke-width="0.8" />
<text x="112.20" y="322.00" font-size="7" text-anchor="end" fill="#d8d8d8" >0.0</text>
<line x1="115.50" y1="319.10" x2="117.70" y2="319.10" stroke="#a8a8a8" stroke-width="0.8" />
<text x="112.20" y="302.40" font-size="7" text-anchor="end" fill="#d8d8d8" >0.2</text>
<line x1="115.50" y1="299.50" x2="117.70" y2="299.50" stroke="#a8a8a8" stroke-width="0.8" />
<text x="112.20" y="282.80" font-size="7" text-anchor="end" fill="#d8d8d8" >0.4</text>
<line x1="115.50" y1="279.90" x2="117.70" y2="279.90" stroke="#a8a8a8" stroke-width="0.8" />
<text x="112.20" y="263.20" font-size="7" text-anchor="end" fill="#d8d8d8" >0.6</text>
<line x1="115.50" y1="260.30" x2="117.70" y2="260.30" stroke="#a8a8a8" stroke-width="0.8" />
<text x="112.20" y="243.60" font-size="7" text-anchor="end" fill="#d8d8d8" >0.8</text>
<line x1="115.50" y1="240.70" x2="117.70" y2="240.70" stroke="#a8a8a8" stroke-width="0.8" />
<line x1="115.50" y1="319.10" x2="538.00" y2="319.10" stroke="#b4b4b4" stroke-width="1.1" />
<line x1="115.50" y1="363.20" x2="117.00" y2="363.20" stroke="#a8a8a8" stroke-width="0.6" />
<line x1="115.50" y1="353.40" x2="117.00" y2="353.40" stroke="#a8a8a8" stroke-width="0.6" />
<line x1="115.50" y1="348.50" x2="117.00" y2="348.50" stroke="#a8a8a8" stroke-width="0.6" />
<line x1="115.50" y1="343.60" x2="117.00" y2="343.60" stroke="#a8a8a8" stroke-width="0.6" />
<line x1="115.50" y1="333.80" x2="117.00" y2="333.80" stroke="#a8a8a8" stroke-width="0.6" />
<line x1="115.50" y1="328.90" x2="117.00" y2="328.90" stroke="#a8a8a8" stroke-width="0.6" />
<line x1="115.50" y1="324.00" x2="117.00" y2="324.00" stroke="#a8a8a8" stroke-width="0.6" />
<line x1="115.50" y1="314.20" x2="117.00" y2="314.20" stroke="#a8a8a8" stroke-width="0.6" />
<line x1="115.50" y1="309.30" x2="117.00" y2="309.30" stroke="#a8a8a8" stroke-width="0.6" />
<line x1="115.50" y1="304.40" x2="117.00" y2="304.40" stroke="#a8a8a8" stroke-width="0.6" />
<line x1="115.50" y1="294.60" x2="117.00" y2="294.60" stroke="#a8a8a8" stroke-width="0.6" />
<line x1="115.50" y1="289.70" x2="117.00" y2="289.70" stroke="#a8a8a8" stroke-width="0.6" />
<line x1="115.50" y1="284.80" x2="117.00" y2="284.80" stroke="#a8a8a8" stroke-width="0.6" />
<line x1="115.50" y1="275.00" x2="117.00" y2="275.00" stroke="#a8a8a8" stroke-width="0.6" />
<line x1="115.50" y1="270.10" x2="117.00" y2="270.10" stroke="#a8a8a8" stroke-width="0.6" />
<line x1="115.50" y1="265.20" x2="117.00" y2="265.20" stroke="#a8a8a8" stroke-width="0.6" />
<line x1="115.50" y1="255.40" x2="117.00" y2="255.40" stroke="#a8a8a8" stroke-width="0.6" />
<line x1="115.50" y1="250.50" x2="117.00" y2="250.50" stroke="#a8a8a8" stroke-width="0.6" />
<line x1="115.50" y1="245.60" x2="117.00" y2="245.60" stroke="#a8a8a8" stroke-width="0.6" />
<line x1="115.50" y1="235.80" x2="117.00" y2="235.80" stroke="#a8a8a8" stroke-width="0.6" />
<line x1="115.50" y1="228.80" x2="115.50" y2="364.30" stroke="#a8a8a8" stroke-width="1" />
<line x1="115.50" y1="364.30" x2="538.00" y2="364.30" stroke="#a8a8a8" stroke-width="1.2" />
<line x1="115.50" y1="228.80" x2="121.80" y2="228.80" stroke="#a8a8a8" stroke-width="1" />
<line x1="221.20" y1="228.80" x2="538.00" y2="228.80" stroke="#a8a8a8" stroke-width="1" />
<rect x="125.30" y="225.60" width="5.80" height="1.20" fill="#d8d8d8" />
<rect x="125.30" y="228.20" width="5.80" height="1.20" fill="#d8d8d8" />
<rect x="125.30" y="230.80" width="5.80" height="1.20" fill="#d8d8d8" />
<text x="133.00" y="231.70" font-size="6.8" fill="#d8d8d8" textLength="84" lengthAdjust="spacingAndGlyphs">GPS Querbeschleunigung [g]</text>
<line x1="125.32" y1="376.60" x2="125.32" y2="512.00" stroke="#2e2e2e" stroke-width="0.7" />
<line x1="135.14" y1="376.60" x2="135.14" y2="512.00" stroke="#2e2e2e" stroke-width="0.7" />
<line x1="144.96" y1="376.60" x2="144.96" y2="512.00" stroke="#2e2e2e" stroke-width="0.7" />
<line x1="154.78" y1="376.60" x2="154.78" y2="512.00" stroke="#2e2e2e" stroke-width="0.7" />
<line x1="164.60" y1="376.60" x2="164.60" y2="512.00" stroke="#484848" stroke-width="0.8" />
<line x1="174.42" y1="376.60" x2="174.42" y2="512.00" stroke="#2e2e2e" stroke-width="0.7" />
<line x1="184.24" y1="376.60" x2="184.24" y2="512.00" stroke="#2e2e2e" stroke-width="0.7" />
<line x1="194.06" y1="376.60" x2="194.06" y2="512.00" stroke="#2e2e2e" stroke-width="0.7" />
<line x1="203.88" y1="376.60" x2="203.88" y2="512.00" stroke="#2e2e2e" stroke-width="0.7" />
<line x1="213.70" y1="376.60" x2="213.70" y2="512.00" stroke="#484848" stroke-width="0.8" />
<line x1="223.52" y1="376.60" x2="223.52" y2="512.00" stroke="#2e2e2e" stroke-width="0.7" />
<line x1="233.34" y1="376.60" x2="233.34" y2="512.00" stroke="#2e2e2e" stroke-width="0.7" />
<line x1="243.16" y1="376.60" x2="243.16" y2="512.00" stroke="#2e2e2e" stroke-width="0.7" />
<line x1="252.98" y1="376.60" x2="252.98" y2="512.00" stroke="#2e2e2e" stroke-width="0.7" />
<line x1="262.80" y1="376.60" x2="262.80" y2="512.00" stroke="#484848" stroke-width="0.8" />
<line x1="272.62" y1="376.60" x2="272.62" y2="512.00" stroke="#2e2e2e" stroke-width="0.7" />
<line x1="282.44" y1="376.60" x2="282.44" y2="512.00" stroke="#2e2e2e" stroke-width="0.7" />
<line x1="292.26" y1="376.60" x2="292.26" y2="512.00" stroke="#2e2e2e" stroke-width="0.7" />
<line x1="302.08" y1="376.60" x2="302.08" y2="512.00" stroke="#2e2e2e" stroke-width="0.7" />
<line x1="311.90" y1="376.60" x2="311.90" y2="512.00" stroke="#484848" stroke-width="0.8" />
<line x1="321.72" y1="376.60" x2="321.72" y2="512.00" stroke="#2e2e2e" stroke-width="0.7" />
<line x1="331.54" y1="376.60" x2="331.54" y2="512.00" stroke="#2e2e2e" stroke-width="0.7" />
<line x1="341.36" y1="376.60" x2="341.36" y2="512.00" stroke="#2e2e2e" stroke-width="0.7" />
<line x1="351.18" y1="376.60" x2="351.18" y2="512.00" stroke="#2e2e2e" stroke-width="0.7" />
<line x1="361.00" y1="376.60" x2="361.00" y2="512.00" stroke="#484848" stroke-width="0.8" />
<line x1="370.82" y1="376.60" x2="370.82" y2="512.00" stroke="#2e2e2e" stroke-width="0.7" />
<line x1="380.64" y1="376.60" x2="380.64" y2="512.00" stroke="#2e2e2e" stroke-width="0.7" />
<line x1="390.46" y1="376.60" x2="390.46" y2="512.00" stroke="#2e2e2e" stroke-width="0.7" />
<line x1="400.28" y1="376.60" x2="400.28" y2="512.00" stroke="#2e2e2e" stroke-width="0.7" />
<line x1="410.10" y1="376.60" x2="410.10" y2="512.00" stroke="#484848" stroke-width="0.8" />
<line x1="419.92" y1="376.60" x2="419.92" y2="512.00" stroke="#2e2e2e" stroke-width="0.7" />
<line x1="429.74" y1="376.60" x2="429.74" y2="512.00" stroke="#2e2e2e" stroke-width="0.7" />
<line x1="439.56" y1="376.60" x2="439.56" y2="512.00" stroke="#2e2e2e" stroke-width="0.7" />
<line x1="449.38" y1="376.60" x2="449.38" y2="512.00" stroke="#2e2e2e" stroke-width="0.7" />
<line x1="459.20" y1="376.60" x2="459.20" y2="512.00" stroke="#484848" stroke-width="0.8" />
<line x1="469.02" y1="376.60" x2="469.02" y2="512.00" stroke="#2e2e2e" stroke-width="0.7" />
<line x1="478.84" y1="376.60" x2="478.84" y2="512.00" stroke="#2e2e2e" stroke-width="0.7" />
<line x1="488.66" y1="376.60" x2="488.66" y2="512.00" stroke="#2e2e2e" stroke-width="0.7" />
<line x1="498.48" y1="376.60" x2="498.48" y2="512.00" stroke="#2e2e2e" stroke-width="0.7" />
<line x1="508.30" y1="376.60" x2="508.30" y2="512.00" stroke="#484848" stroke-width="0.8" />
<line x1="518.12" y1="376.60" x2="518.12" y2="512.00" stroke="#2e2e2e" stroke-width="0.7" />
<line x1="527.94" y1="376.60" x2="527.94" y2="512.00" stroke="#2e2e2e" stroke-width="0.7" />
<line x1="537.76" y1="376.60" x2="537.76" y2="512.00" stroke="#2e2e2e" stroke-width="0.7" />
<line x1="115.50" y1="506.71" x2="538.00" y2="506.71" stroke="#282828" stroke-width="0.7" />
<line x1="115.50" y1="502.18" x2="538.00" y2="502.18" stroke="#282828" stroke-width="0.7" />
<line x1="115.50" y1="497.64" x2="538.00" y2="497.64" stroke="#282828" stroke-width="0.7" />
<line x1="115.50" y1="488.56" x2="538.00" y2="488.56" stroke="#282828" stroke-width="0.7" />
<line x1="115.50" y1="484.03" x2="538.00" y2="484.03" stroke="#282828" stroke-width="0.7" />
<line x1="115.50" y1="479.49" x2="538.00" y2="479.49" stroke="#282828" stroke-width="0.7" />
<line x1="115.50" y1="470.41" x2="538.00" y2="470.41" stroke="#282828" stroke-width="0.7" />
<line x1="115.50" y1="465.88" x2="538.00" y2="465.88" stroke="#282828" stroke-width="0.7" />
<line x1="115.50" y1="461.34" x2="538.00" y2="461.34" stroke="#282828" stroke-width="0.7" />
<line x1="115.50" y1="452.26" x2="538.00" y2="452.26" stroke="#282828" stroke-width="0.7" />
<line x1="115.50" y1="447.73" x2="538.00" y2="447.73" stroke="#282828" stroke-width="0.7" />
<line x1="115.50" y1="443.19" x2="538.00" y2="443.19" stroke="#282828" stroke-width="0.7" />
<line x1="115.50" y1="434.11" x2="538.00" y2="434.11" stroke="#282828" stroke-width="0.7" />
<line x1="115.50" y1="429.57" x2="538.00" y2="429.57" stroke="#282828" stroke-width="0.7" />
<line x1="115.50" y1="425.04" x2="538.00" y2="425.04" stroke="#282828" stroke-width="0.7" />
<line x1="115.50" y1="415.96" x2="538.00" y2="415.96" stroke="#282828" stroke-width="0.7" />
<line x1="115.50" y1="411.43" x2="538.00" y2="411.43" stroke="#282828" stroke-width="0.7" />
<line x1="115.50" y1="406.89" x2="538.00" y2="406.89" stroke="#282828" stroke-width="0.7" />
<line x1="115.50" y1="397.81" x2="538.00" y2="397.81" stroke="#282828" stroke-width="0.7" />
<line x1="115.50" y1="393.28" x2="538.00" y2="393.28" stroke="#282828" stroke-width="0.7" />
<line x1="115.50" y1="388.74" x2="538.00" y2="388.74" stroke="#282828" stroke-width="0.7" />
<line x1="115.50" y1="379.66" x2="538.00" y2="379.66" stroke="#282828" stroke-width="0.7" />
<line x1="115.50" y1="511.25" x2="538.00" y2="511.25" stroke="#606060" stroke-width="0.8" />
<line x1="115.50" y1="493.10" x2="538.00" y2="493.10" stroke="#606060" stroke-width="0.8" />
<line x1="115.50" y1="474.95" x2="538.00" y2="474.95" stroke="#606060" stroke-width="0.8" />
<line x1="115.50" y1="438.65" x2="538.00" y2="438.65" stroke="#606060" stroke-width="0.8" />
<line x1="115.50" y1="420.50" x2="538.00" y2="420.50" stroke="#606060" stroke-width="0.8" />
<line x1="115.50" y1="402.35" x2="538.00" y2="402.35" stroke="#606060" stroke-width="0.8" />
<line x1="115.50" y1="384.20" x2="538.00" y2="384.20" stroke="#606060" stroke-width="0.8" />
<text x="112.20" y="514.15" font-size="7" text-anchor="end" fill="#d8d8d8" >-0.3</text>
<line x1="115.50" y1="511.25" x2="117.70" y2="511.25" stroke="#a8a8a8" stroke-width="0.8" />
<text x="112.20" y="496.00" font-size="7" text-anchor="end" fill="#d8d8d8" >-0.2</text>
<line x1="115.50" y1="493.10" x2="117.70" y2="493.10" stroke="#a8a8a8" stroke-width="0.8" />
<text x="112.20" y="477.85" font-size="7" text-anchor="end" fill="#d8d8d8" >-0.1</text>
<line x1="115.50" y1="474.95" x2="117.70" y2="474.95" stroke="#a8a8a8" stroke-width="0.8" />
<text x="112.20" y="459.70" font-size="7" text-anchor="end" fill="#d8d8d8" >0.0</text>
<line x1="115.50" y1="456.80" x2="117.70" y2="456.80" stroke="#a8a8a8" stroke-width="0.8" />
<text x="112.20" y="441.55" font-size="7" text-anchor="end" fill="#d8d8d8" >0.1</text>
<line x1="115.50" y1="438.65" x2="117.70" y2="438.65" stroke="#a8a8a8" stroke-width="0.8" />
<text x="112.20" y="423.40" font-size="7" text-anchor="end" fill="#d8d8d8" >0.2</text>
<line x1="115.50" y1="420.50" x2="117.70" y2="420.50" stroke="#a8a8a8" stroke-width="0.8" />
<text x="112.20" y="405.25" font-size="7" text-anchor="end" fill="#d8d8d8" >0.3</text>
<line x1="115.50" y1="402.35" x2="117.70" y2="402.35" stroke="#a8a8a8" stroke-width="0.8" />
<text x="112.20" y="387.10" font-size="7" text-anchor="end" fill="#d8d8d8" >0.4</text>
<line x1="115.50" y1="384.20" x2="117.70" y2="384.20" stroke="#a8a8a8" stroke-width="0.8" />
<line x1="115.50" y1="456.80" x2="538.00" y2="456.80" stroke="#b4b4b4" stroke-width="1.1" />
<line x1="115.50" y1="506.71" x2="117.00" y2="506.71" stroke="#a8a8a8" stroke-width="0.6" />
<line x1="115.50" y1="502.18" x2="117.00" y2="502.18" stroke="#a8a8a8" stroke-width="0.6" />
<line x1="115.50" y1="497.64" x2="117.00" y2="497.64" stroke="#a8a8a8" stroke-width="0.6" />
<line x1="115.50" y1="488.56" x2="117.00" y2="488.56" stroke="#a8a8a8" stroke-width="0.6" />
<line x1="115.50" y1="484.03" x2="117.00" y2="484.03" stroke="#a8a8a8" stroke-width="0.6" />
<line x1="115.50" y1="479.49" x2="117.00" y2="479.49" stroke="#a8a8a8" stroke-width="0.6" />
<line x1="115.50" y1="470.41" x2="117.00" y2="470.41" stroke="#a8a8a8" stroke-width="0.6" />
<line x1="115.50" y1="465.88" x2="117.00" y2="465.88" stroke="#a8a8a8" stroke-width="0.6" />
<line x1="115.50" y1="461.34" x2="117.00" y2="461.34" stroke="#a8a8a8" stroke-width="0.6" />
<line x1="115.50" y1="452.26" x2="117.00" y2="452.26" stroke="#a8a8a8" stroke-width="0.6" />
<line x1="115.50" y1="447.73" x2="117.00" y2="447.73" stroke="#a8a8a8" stroke-width="0.6" />
<line x1="115.50" y1="443.19" x2="117.00" y2="443.19" stroke="#a8a8a8" stroke-width="0.6" />
<line x1="115.50" y1="434.11" x2="117.00" y2="434.11" stroke="#a8a8a8" stroke-width="0.6" />
<line x1="115.50" y1="429.57" x2="117.00" y2="429.57" stroke="#a8a8a8" stroke-width="0.6" />
<line x1="115.50" y1="425.04" x2="117.00" y2="425.04" stroke="#a8a8a8" stroke-width="0.6" />
<line x1="115.50" y1="415.96" x2="117.00" y2="415.96" stroke="#a8a8a8" stroke-width="0.6" />
<line x1="115.50" y1="411.43" x2="117.00" y2="411.43" stroke="#a8a8a8" stroke-width="0.6" />
<line x1="115.50" y1="406.89" x2="117.00" y2="406.89" stroke="#a8a8a8" stroke-width="0.6" />
<line x1="115.50" y1="397.81" x2="117.00" y2="397.81" stroke="#a8a8a8" stroke-width="0.6" />
<line x1="115.50" y1="393.28" x2="117.00" y2="393.28" stroke="#a8a8a8" stroke-width="0.6" />
<line x1="115.50" y1="388.74" x2="117.00" y2="388.74" stroke="#a8a8a8" stroke-width="0.6" />
<line x1="115.50" y1="379.66" x2="117.00" y2="379.66" stroke="#a8a8a8" stroke-width="0.6" />
<line x1="115.50" y1="376.60" x2="115.50" y2="512.00" stroke="#a8a8a8" stroke-width="1" />
<line x1="115.50" y1="512.00" x2="538.00" y2="512.00" stroke="#a8a8a8" stroke-width="1.2" />
<line x1="115.50" y1="376.60" x2="121.80" y2="376.60" stroke="#a8a8a8" stroke-width="1" />
<line x1="222.70" y1="376.60" x2="538.00" y2="376.60" stroke="#a8a8a8" stroke-width="1" />
<rect x="125.30" y="373.40" width="5.80" height="1.20" fill="#d8d8d8" />
<rect x="125.30" y="376.00" width="5.80" height="1.20" fill="#d8d8d8" />
<rect x="125.30" y="378.60" width="5.80" height="1.20" fill="#d8d8d8" />
<text x="133.00" y="379.50" font-size="6.8" fill="#d8d8d8" textLength="85.5" lengthAdjust="spacingAndGlyphs">GPS Längsbeschleunigung [g]</text>
<line x1="125.32" y1="525.70" x2="125.32" y2="588.40" stroke="#2e2e2e" stroke-width="0.7" />
<line x1="135.14" y1="525.70" x2="135.14" y2="588.40" stroke="#2e2e2e" stroke-width="0.7" />
<line x1="144.96" y1="525.70" x2="144.96" y2="588.40" stroke="#2e2e2e" stroke-width="0.7" />
<line x1="154.78" y1="525.70" x2="154.78" y2="588.40" stroke="#2e2e2e" stroke-width="0.7" />
<line x1="164.60" y1="525.70" x2="164.60" y2="588.40" stroke="#484848" stroke-width="0.8" />
<line x1="174.42" y1="525.70" x2="174.42" y2="588.40" stroke="#2e2e2e" stroke-width="0.7" />
<line x1="184.24" y1="525.70" x2="184.24" y2="588.40" stroke="#2e2e2e" stroke-width="0.7" />
<line x1="194.06" y1="525.70" x2="194.06" y2="588.40" stroke="#2e2e2e" stroke-width="0.7" />
<line x1="203.88" y1="525.70" x2="203.88" y2="588.40" stroke="#2e2e2e" stroke-width="0.7" />
<line x1="213.70" y1="525.70" x2="213.70" y2="588.40" stroke="#484848" stroke-width="0.8" />
<line x1="223.52" y1="525.70" x2="223.52" y2="588.40" stroke="#2e2e2e" stroke-width="0.7" />
<line x1="233.34" y1="525.70" x2="233.34" y2="588.40" stroke="#2e2e2e" stroke-width="0.7" />
<line x1="243.16" y1="525.70" x2="243.16" y2="588.40" stroke="#2e2e2e" stroke-width="0.7" />
<line x1="252.98" y1="525.70" x2="252.98" y2="588.40" stroke="#2e2e2e" stroke-width="0.7" />
<line x1="262.80" y1="525.70" x2="262.80" y2="588.40" stroke="#484848" stroke-width="0.8" />
<line x1="272.62" y1="525.70" x2="272.62" y2="588.40" stroke="#2e2e2e" stroke-width="0.7" />
<line x1="282.44" y1="525.70" x2="282.44" y2="588.40" stroke="#2e2e2e" stroke-width="0.7" />
<line x1="292.26" y1="525.70" x2="292.26" y2="588.40" stroke="#2e2e2e" stroke-width="0.7" />
<line x1="302.08" y1="525.70" x2="302.08" y2="588.40" stroke="#2e2e2e" stroke-width="0.7" />
<line x1="311.90" y1="525.70" x2="311.90" y2="588.40" stroke="#484848" stroke-width="0.8" />
<line x1="321.72" y1="525.70" x2="321.72" y2="588.40" stroke="#2e2e2e" stroke-width="0.7" />
<line x1="331.54" y1="525.70" x2="331.54" y2="588.40" stroke="#2e2e2e" stroke-width="0.7" />
<line x1="341.36" y1="525.70" x2="341.36" y2="588.40" stroke="#2e2e2e" stroke-width="0.7" />
<line x1="351.18" y1="525.70" x2="351.18" y2="588.40" stroke="#2e2e2e" stroke-width="0.7" />
<line x1="361.00" y1="525.70" x2="361.00" y2="588.40" stroke="#484848" stroke-width="0.8" />
<line x1="370.82" y1="525.70" x2="370.82" y2="588.40" stroke="#2e2e2e" stroke-width="0.7" />
<line x1="380.64" y1="525.70" x2="380.64" y2="588.40" stroke="#2e2e2e" stroke-width="0.7" />
<line x1="390.46" y1="525.70" x2="390.46" y2="588.40" stroke="#2e2e2e" stroke-width="0.7" />
<line x1="400.28" y1="525.70" x2="400.28" y2="588.40" stroke="#2e2e2e" stroke-width="0.7" />
<line x1="410.10" y1="525.70" x2="410.10" y2="588.40" stroke="#484848" stroke-width="0.8" />
<line x1="419.92" y1="525.70" x2="419.92" y2="588.40" stroke="#2e2e2e" stroke-width="0.7" />
<line x1="429.74" y1="525.70" x2="429.74" y2="588.40" stroke="#2e2e2e" stroke-width="0.7" />
<line x1="439.56" y1="525.70" x2="439.56" y2="588.40" stroke="#2e2e2e" stroke-width="0.7" />
<line x1="449.38" y1="525.70" x2="449.38" y2="588.40" stroke="#2e2e2e" stroke-width="0.7" />
<line x1="459.20" y1="525.70" x2="459.20" y2="588.40" stroke="#484848" stroke-width="0.8" />
<line x1="469.02" y1="525.70" x2="469.02" y2="588.40" stroke="#2e2e2e" stroke-width="0.7" />
<line x1="478.84" y1="525.70" x2="478.84" y2="588.40" stroke="#2e2e2e" stroke-width="0.7" />
<line x1="488.66" y1="525.70" x2="488.66" y2="588.40" stroke="#2e2e2e" stroke-width="0.7" />
<line x1="498.48" y1="525.70" x2="498.48" y2="588.40" stroke="#2e2e2e" stroke-width="0.7" />
<line x1="508.30" y1="525.70" x2="508.30" y2="588.40" stroke="#484848" stroke-width="0.8" />
<line x1="518.12" y1="525.70" x2="518.12" y2="588.40" stroke="#2e2e2e" stroke-width="0.7" />
<line x1="527.94" y1="525.70" x2="527.94" y2="588.40" stroke="#2e2e2e" stroke-width="0.7" />
<line x1="537.76" y1="525.70" x2="537.76" y2="588.40" stroke="#2e2e2e" stroke-width="0.7" />
<line x1="115.50" y1="527.94" x2="538.00" y2="527.94" stroke="#282828" stroke-width="0.7" />
<line x1="115.50" y1="530.19" x2="538.00" y2="530.19" stroke="#282828" stroke-width="0.7" />
<line x1="115.50" y1="532.43" x2="538.00" y2="532.43" stroke="#282828" stroke-width="0.7" />
<line x1="115.50" y1="536.91" x2="538.00" y2="536.91" stroke="#282828" stroke-width="0.7" />
<line x1="115.50" y1="539.16" x2="538.00" y2="539.16" stroke="#282828" stroke-width="0.7" />
<line x1="115.50" y1="541.40" x2="538.00" y2="541.40" stroke="#282828" stroke-width="0.7" />
<line x1="115.50" y1="545.88" x2="538.00" y2="545.88" stroke="#282828" stroke-width="0.7" />
<line x1="115.50" y1="548.12" x2="538.00" y2="548.12" stroke="#282828" stroke-width="0.7" />
<line x1="115.50" y1="550.37" x2="538.00" y2="550.37" stroke="#282828" stroke-width="0.7" />
<line x1="115.50" y1="554.85" x2="538.00" y2="554.85" stroke="#282828" stroke-width="0.7" />
<line x1="115.50" y1="557.10" x2="538.00" y2="557.10" stroke="#282828" stroke-width="0.7" />
<line x1="115.50" y1="559.34" x2="538.00" y2="559.34" stroke="#282828" stroke-width="0.7" />
<line x1="115.50" y1="563.82" x2="538.00" y2="563.82" stroke="#282828" stroke-width="0.7" />
<line x1="115.50" y1="566.07" x2="538.00" y2="566.07" stroke="#282828" stroke-width="0.7" />
<line x1="115.50" y1="568.31" x2="538.00" y2="568.31" stroke="#282828" stroke-width="0.7" />
<line x1="115.50" y1="572.79" x2="538.00" y2="572.79" stroke="#282828" stroke-width="0.7" />
<line x1="115.50" y1="575.04" x2="538.00" y2="575.04" stroke="#282828" stroke-width="0.7" />
<line x1="115.50" y1="577.28" x2="538.00" y2="577.28" stroke="#282828" stroke-width="0.7" />
<line x1="115.50" y1="581.76" x2="538.00" y2="581.76" stroke="#282828" stroke-width="0.7" />
<line x1="115.50" y1="584.01" x2="538.00" y2="584.01" stroke="#282828" stroke-width="0.7" />
<line x1="115.50" y1="586.25" x2="538.00" y2="586.25" stroke="#282828" stroke-width="0.7" />
<line x1="115.50" y1="534.67" x2="538.00" y2="534.67" stroke="#5a5a5a" stroke-width="0.8" />
<line x1="115.50" y1="543.64" x2="538.00" y2="543.64" stroke="#3a3a3a" stroke-width="0.8" />
<line x1="115.50" y1="552.61" x2="538.00" y2="552.61" stroke="#5a5a5a" stroke-width="0.8" />
<line x1="115.50" y1="561.58" x2="538.00" y2="561.58" stroke="#3a3a3a" stroke-width="0.8" />
<line x1="115.50" y1="570.55" x2="538.00" y2="570.55" stroke="#5a5a5a" stroke-width="0.8" />
<line x1="115.50" y1="579.52" x2="538.00" y2="579.52" stroke="#3a3a3a" stroke-width="0.8" />
<text x="112.20" y="528.60" font-size="7" text-anchor="end" fill="#d8d8d8" >0</text>
<line x1="115.50" y1="525.70" x2="117.70" y2="525.70" stroke="#a8a8a8" stroke-width="0.8" />
<text x="112.20" y="537.57" font-size="7" text-anchor="end" fill="#d8d8d8" >-1</text>
<line x1="115.50" y1="534.67" x2="117.70" y2="534.67" stroke="#a8a8a8" stroke-width="0.8" />
<text x="112.20" y="546.54" font-size="7" text-anchor="end" fill="#d8d8d8" >-2</text>
<line x1="115.50" y1="543.64" x2="117.70" y2="543.64" stroke="#a8a8a8" stroke-width="0.8" />
<text x="112.20" y="555.51" font-size="7" text-anchor="end" fill="#d8d8d8" >-3</text>
<line x1="115.50" y1="552.61" x2="117.70" y2="552.61" stroke="#a8a8a8" stroke-width="0.8" />
<text x="112.20" y="564.48" font-size="7" text-anchor="end" fill="#d8d8d8" >-4</text>
<line x1="115.50" y1="561.58" x2="117.70" y2="561.58" stroke="#a8a8a8" stroke-width="0.8" />
<text x="112.20" y="573.45" font-size="7" text-anchor="end" fill="#d8d8d8" >-5</text>
<line x1="115.50" y1="570.55" x2="117.70" y2="570.55" stroke="#a8a8a8" stroke-width="0.8" />
<text x="112.20" y="582.42" font-size="7" text-anchor="end" fill="#d8d8d8" >-6</text>
<line x1="115.50" y1="579.52" x2="117.70" y2="579.52" stroke="#a8a8a8" stroke-width="0.8" />
<line x1="115.50" y1="525.70" x2="115.50" y2="588.40" stroke="#a8a8a8" stroke-width="1" />
<line x1="115.50" y1="588.40" x2="538.00" y2="588.40" stroke="#a8a8a8" stroke-width="1.2" />
<line x1="115.50" y1="525.70" x2="538.00" y2="525.70" stroke="#a8a8a8" stroke-width="1.2" />
<text x="124.40" y="527.60" font-size="6.8" fill="#d4ccd4" textLength="58" lengthAdjust="spacingAndGlyphs">Gewonnene Zeit [s]</text>
<line x1="115.50" y1="614.90" x2="538.00" y2="614.90" stroke="#a8a8a8" stroke-width="1" />
<line x1="115.50" y1="611.30" x2="115.50" y2="614.90" stroke="#a8a8a8" stroke-width="0.9" />
<text x="115.50" y="623.30" font-size="6.6" text-anchor="middle" fill="#d8d8d8" >0</text>
<line x1="125.32" y1="613.20" x2="125.32" y2="614.90" stroke="#a8a8a8" stroke-width="0.8" />
<line x1="135.14" y1="613.20" x2="135.14" y2="614.90" stroke="#a8a8a8" stroke-width="0.8" />
<line x1="144.96" y1="613.20" x2="144.96" y2="614.90" stroke="#a8a8a8" stroke-width="0.8" />
<line x1="154.78" y1="613.20" x2="154.78" y2="614.90" stroke="#a8a8a8" stroke-width="0.8" />
<line x1="164.60" y1="611.30" x2="164.60" y2="614.90" stroke="#a8a8a8" stroke-width="0.9" />
<text x="164.60" y="623.30" font-size="6.6" text-anchor="middle" fill="#d8d8d8" >100</text>
<line x1="174.42" y1="613.20" x2="174.42" y2="614.90" stroke="#a8a8a8" stroke-width="0.8" />
<line x1="184.24" y1="613.20" x2="184.24" y2="614.90" stroke="#a8a8a8" stroke-width="0.8" />
<line x1="194.06" y1="613.20" x2="194.06" y2="614.90" stroke="#a8a8a8" stroke-width="0.8" />
<line x1="203.88" y1="613.20" x2="203.88" y2="614.90" stroke="#a8a8a8" stroke-width="0.8" />
<line x1="213.70" y1="611.30" x2="213.70" y2="614.90" stroke="#a8a8a8" stroke-width="0.9" />
<text x="213.70" y="623.30" font-size="6.6" text-anchor="middle" fill="#d8d8d8" >200</text>
<line x1="223.52" y1="613.20" x2="223.52" y2="614.90" stroke="#a8a8a8" stroke-width="0.8" />
<line x1="233.34" y1="613.20" x2="233.34" y2="614.90" stroke="#a8a8a8" stroke-width="0.8" />
<line x1="243.16" y1="613.20" x2="243.16" y2="614.90" stroke="#a8a8a8" stroke-width="0.8" />
<line x1="252.98" y1="613.20" x2="252.98" y2="614.90" stroke="#a8a8a8" stroke-width="0.8" />
<line x1="262.80" y1="611.30" x2="262.80" y2="614.90" stroke="#a8a8a8" stroke-width="0.9" />
<text x="262.80" y="623.30" font-size="6.6" text-anchor="middle" fill="#d8d8d8" >300</text>
<line x1="272.62" y1="613.20" x2="272.62" y2="614.90" stroke="#a8a8a8" stroke-width="0.8" />
<line x1="282.44" y1="613.20" x2="282.44" y2="614.90" stroke="#a8a8a8" stroke-width="0.8" />
<line x1="292.26" y1="613.20" x2="292.26" y2="614.90" stroke="#a8a8a8" stroke-width="0.8" />
<line x1="302.08" y1="613.20" x2="302.08" y2="614.90" stroke="#a8a8a8" stroke-width="0.8" />
<line x1="311.90" y1="611.30" x2="311.90" y2="614.90" stroke="#a8a8a8" stroke-width="0.9" />
<text x="311.90" y="623.30" font-size="6.6" text-anchor="middle" fill="#d8d8d8" >400</text>
<line x1="321.72" y1="613.20" x2="321.72" y2="614.90" stroke="#a8a8a8" stroke-width="0.8" />
<line x1="331.54" y1="613.20" x2="331.54" y2="614.90" stroke="#a8a8a8" stroke-width="0.8" />
<line x1="341.36" y1="613.20" x2="341.36" y2="614.90" stroke="#a8a8a8" stroke-width="0.8" />
<line x1="351.18" y1="613.20" x2="351.18" y2="614.90" stroke="#a8a8a8" stroke-width="0.8" />
<line x1="361.00" y1="611.30" x2="361.00" y2="614.90" stroke="#a8a8a8" stroke-width="0.9" />
<text x="361.00" y="623.30" font-size="6.6" text-anchor="middle" fill="#d8d8d8" >500</text>
<line x1="370.82" y1="613.20" x2="370.82" y2="614.90" stroke="#a8a8a8" stroke-width="0.8" />
<line x1="380.64" y1="613.20" x2="380.64" y2="614.90" stroke="#a8a8a8" stroke-width="0.8" />
<line x1="390.46" y1="613.20" x2="390.46" y2="614.90" stroke="#a8a8a8" stroke-width="0.8" />
<line x1="400.28" y1="613.20" x2="400.28" y2="614.90" stroke="#a8a8a8" stroke-width="0.8" />
<line x1="410.10" y1="611.30" x2="410.10" y2="614.90" stroke="#a8a8a8" stroke-width="0.9" />
<text x="410.10" y="623.30" font-size="6.6" text-anchor="middle" fill="#d8d8d8" >600</text>
<line x1="419.92" y1="613.20" x2="419.92" y2="614.90" stroke="#a8a8a8" stroke-width="0.8" />
<line x1="429.74" y1="613.20" x2="429.74" y2="614.90" stroke="#a8a8a8" stroke-width="0.8" />
<line x1="439.56" y1="613.20" x2="439.56" y2="614.90" stroke="#a8a8a8" stroke-width="0.8" />
<line x1="449.38" y1="613.20" x2="449.38" y2="614.90" stroke="#a8a8a8" stroke-width="0.8" />
<line x1="459.20" y1="611.30" x2="459.20" y2="614.90" stroke="#a8a8a8" stroke-width="0.9" />
<text x="459.20" y="623.30" font-size="6.6" text-anchor="middle" fill="#d8d8d8" >700</text>
<line x1="469.02" y1="613.20" x2="469.02" y2="614.90" stroke="#a8a8a8" stroke-width="0.8" />
<line x1="478.84" y1="613.20" x2="478.84" y2="614.90" stroke="#a8a8a8" stroke-width="0.8" />
<line x1="488.66" y1="613.20" x2="488.66" y2="614.90" stroke="#a8a8a8" stroke-width="0.8" />
<line x1="498.48" y1="613.20" x2="498.48" y2="614.90" stroke="#a8a8a8" stroke-width="0.8" />
<line x1="508.30" y1="611.30" x2="508.30" y2="614.90" stroke="#a8a8a8" stroke-width="0.9" />
<text x="508.30" y="623.30" font-size="6.6" text-anchor="middle" fill="#d8d8d8" >800</text>
<line x1="518.12" y1="613.20" x2="518.12" y2="614.90" stroke="#a8a8a8" stroke-width="0.8" />
<line x1="527.94" y1="613.20" x2="527.94" y2="614.90" stroke="#a8a8a8" stroke-width="0.8" />
<line x1="537.76" y1="613.20" x2="537.76" y2="614.90" stroke="#a8a8a8" stroke-width="0.8" />
<line x1="538.00" y1="612.80" x2="538.00" y2="614.90" stroke="#a8a8a8" stroke-width="0.8" />
<text x="309.00" y="634.00" font-size="6.8" fill="#d8d8d8" textLength="33.3" lengthAdjust="spacingAndGlyphs">Distanz [m]</text>
<rect x="548.80" y="65.20" width="250.20" height="12.20" fill="#dcdcdc" />
<text x="552.00" y="74.20" font-size="6.8" fill="#2a2a2a" stroke="#2a2a2a" stroke-width="0.16" textLength="41.5" lengthAdjust="spacingAndGlyphs">Streckenkarte</text>
<path d="M782.8,70.6 V68.8 H785.6 V71.5 H784.4" fill="none" stroke="#1a1a1a" stroke-width="1.1"/><rect x="781.4" y="70.9" width="3" height="2.7" fill="#fff" stroke="#1a1a1a" stroke-width="1.1"/>
<line x1="791.30" y1="68.80" x2="795.70" y2="73.10" stroke="#1a1a1a" stroke-width="1.3" />
<line x1="795.70" y1="68.80" x2="791.30" y2="73.10" stroke="#1a1a1a" stroke-width="1.3" />
<rect x="548.80" y="77.60" width="250.20" height="16.50" fill="#f0f0f0" />
<rect x="550.40" y="78.30" width="13.90" height="14.00" fill="#c8e0f6" />
<rect x="565.00" y="78.30" width="13.00" height="14.00" fill="#c8e0f6" />
<rect x="552.5" y="80.5" width="10" height="9.5" fill="none" stroke="#6a96c0" stroke-width="0.7"/>
<line x1="555.83" y1="80.50" x2="555.83" y2="90.00" stroke="#6a96c0" stroke-width="0.6" />
<line x1="552.50" y1="83.67" x2="562.50" y2="83.67" stroke="#6a96c0" stroke-width="0.6" />
<line x1="559.16" y1="80.50" x2="559.16" y2="90.00" stroke="#6a96c0" stroke-width="0.6" />
<line x1="552.50" y1="86.84" x2="562.50" y2="86.84" stroke="#6a96c0" stroke-width="0.6" />
<rect x="566.5" y="80" width="10" height="10" fill="#e8f0c0" stroke="#5a8ab8" stroke-width="0.7"/><path d="M567,89.5 h9 v-2 q-4.5,-2 -9,0 z" fill="#58b030"/><circle cx="571.5" cy="84" r="1.6" fill="#e8a020"/>
<path d="M581,80.5 h4.5 v4 l5,5" fill="none" stroke="#777" stroke-width="0.7"/><rect x="580.5" y="80" width="5" height="4" fill="#f4f4f4" stroke="#888" stroke-width="0.5"/>
<circle cx="600" cy="84.5" r="3.9" fill="#cfe6f8" stroke="#4a84b8" stroke-width="0.7"/><path d="M602.6,87.1 l2.4,2.4" stroke="#d89030" stroke-width="1.3"/>
<circle cx="614.8" cy="84.5" r="3.9" fill="#cfe6f8" stroke="#4a84b8" stroke-width="0.7"/><path d="M617.4,87.1 l2.4,2.4" stroke="#d89030" stroke-width="1.3"/>
<circle cx="629.2" cy="84.5" r="3.9" fill="#cfe6f8" stroke="#4a84b8" stroke-width="0.7"/><path d="M631.8000000000001,87.1 l2.4,2.4" stroke="#d89030" stroke-width="1.3"/>
<line x1="638.20" y1="80.00" x2="638.20" y2="91.00" stroke="#d6d6d6" stroke-width="0.8" />
<path d="M651.5,82.5 A4.2,4.2 0 1 0 651.5,87" fill="none" stroke="#6ab020" stroke-width="2"/><path d="M649,80 l4,2.5 l-4,2 z" fill="#6ab020"/>
<line x1="654.40" y1="84.80" x2="769.00" y2="84.80" stroke="#d0d0d0" stroke-width="1" />
<rect x="709.00" y="78.30" width="6.50" height="13.80" fill="#1878d8" />
<path d="M773,82.5 A4.2,4.2 0 1 1 773,87" fill="none" stroke="#6ab020" stroke-width="2"/><path d="M775.5,80 l-4,2.5 l4,2 z" fill="#6ab020"/>
<path d="M789,80 v9 M792,80 v9" stroke="#8a8a8a" stroke-width="1.2"/><path d="M787,81 L795,90" stroke="#e03030" stroke-width="1"/>
<rect x="549.80" y="94.60" width="249.00" height="559.00" fill="#000" />
<svg x="550" y="240.5" width="248" height="266.0" viewBox="550 240.5 248 266.0" overflow="hidden">
<defs><filter id="bl" x="-5%" y="-5%" width="110%" height="110%"><feGaussianBlur stdDeviation="0.6"/></filter></defs>
<g filter="url(#bl)">
<rect x="548.00" y="238.50" width="252.00" height="270.00" fill="#9a968a" />
<rect x="548.00" y="238.00" width="62.00" height="61.00" fill="#8a8b74" />
<rect x="548.00" y="238.00" width="11.50" height="61.00" fill="#a39e92" />
<path d="M559,246 L567,244 L576,268 L571,292 L562,296 Z" fill="#6a6e60" opacity="0.8"/>
<rect x="605.00" y="238.00" width="7.50" height="61.00" fill="#a89e8a" />
<path d="M609,238 L631,238 L630,262 L626,280 L622,298 L613,297 L615,272 L610,255 Z" fill="#6a6e68"/>
<path d="M614,245 L628,242 L625,270 L618,290 Z" fill="#50544f" opacity="0.6"/>
<rect x="631.00" y="238.00" width="69.00" height="46.00" fill="#9e9e9c" />
<rect x="650.00" y="240.00" width="30.00" height="5.00" fill="#9a8e7c" opacity="0.7"/>
<path d="M631,287 Q650,283 672,288 L672,298 L631,298 Z" fill="#60645f"/>
<rect x="670.00" y="279.60" width="52.00" height="22.90" fill="#d6d6d4" />
<rect x="672.00" y="282.00" width="18.00" height="14.00" fill="#a8a8a8" opacity="0.6"/>
<rect x="685.00" y="259.50" width="15.00" height="3.50" fill="#5a5c5e" />
<rect x="685.40" y="262.00" width="8.40" height="7.00" fill="#e4e4e4" />
<rect x="698.00" y="263.00" width="8.00" height="8.00" fill="#e0e0e0" />
<rect x="685.00" y="273.00" width="8.00" height="7.60" fill="#e4e4e4" />
<rect x="698.00" y="273.00" width="8.00" height="7.60" fill="#dcdcdc" />
<rect x="693.80" y="262.00" width="4.20" height="18.00" fill="#a8a8a8" />
<rect x="706.00" y="262.00" width="10.00" height="18.00" fill="#e0e0de" />
<rect x="700.00" y="241.00" width="16.00" height="20.00" fill="#9a9a98" />
<rect x="716.00" y="244.00" width="9.00" height="18.00" fill="#5a5c5e" />
<rect x="717.00" y="243.00" width="8.00" height="6.00" fill="#8a6a58" />
<path d="M727,238 L742,238 L740,262 L737,285 L733,306 L725,305 L728,280 L730,258 Z" fill="#555955"/>
<rect x="740.00" y="238.00" width="58.00" height="80.00" fill="#958c7c" />
<rect x="745.00" y="242.00" width="47.00" height="33.00" fill="#a09886" opacity="0.8"/>
<rect x="793.00" y="238.00" width="5.00" height="82.00" fill="#7a7a74" />
<path d="M548,298 L700,302 L740,309 L798,318 L798,322 L740,314 L700,307 L548,304 Z" fill="#aaa8a0"/>
<path d="M760,330 L798,305 L798,308 L762,332 Z" fill="#505050" opacity="0.6"/>
<rect x="554.00" y="306.00" width="20.00" height="24.00" fill="#8a8c7a" />
<rect x="574.00" y="306.00" width="26.00" height="24.00" fill="#aaa69a" />
<rect x="597.60" y="306.00" width="19.10" height="69.00" fill="#7e8074" />
<rect x="616.70" y="306.00" width="10.30" height="69.00" fill="#a29c92" />
<rect x="627.40" y="310.70" width="16.60" height="28.60" fill="#7e8468" />
<rect x="564.00" y="330.40" width="33.60" height="4.10" fill="#3a3e40" />
<rect x="591.00" y="330.40" width="6.60" height="20.60" fill="#3e4244" />
<rect x="562.50" y="334.50" width="28.50" height="16.70" fill="#dedede" />
<rect x="557.00" y="351.00" width="43.00" height="23.00" fill="#a29e94" />
<rect x="560.00" y="370.00" width="40.00" height="4.00" fill="#707070" opacity="0.7"/>
<rect x="598.80" y="356.00" width="8.20" height="15.40" fill="#4a80c0" />
<rect x="644.00" y="315.50" width="50.00" height="120.50" fill="#aa9e8a" />
<ellipse cx="672.7" cy="402.6" rx="2.1" ry="1.7" fill="#7a6e5c" opacity="0.82"/>
<ellipse cx="645.3" cy="371.1" rx="1.7" ry="1.9" fill="#5e584e" opacity="0.50"/>
<ellipse cx="665.6" cy="346.1" rx="0.9" ry="1.1" fill="#3a3834" opacity="0.74"/>
<ellipse cx="662.8" cy="338.8" rx="1.0" ry="1.8" fill="#d4ccbe" opacity="0.51"/>
<ellipse cx="672.4" cy="332.4" rx="2.2" ry="0.8" fill="#4a4640" opacity="0.76"/>
<ellipse cx="688.2" cy="336.9" rx="1.2" ry="2.0" fill="#5e584e" opacity="0.67"/>
<ellipse cx="675.2" cy="341.3" rx="1.1" ry="2.0" fill="#7a6e5c" opacity="0.60"/>
<ellipse cx="645.0" cy="365.3" rx="1.2" ry="1.2" fill="#5e584e" opacity="0.78"/>
<ellipse cx="671.0" cy="385.9" rx="1.3" ry="1.2" fill="#7a6e5c" opacity="0.78"/>
<ellipse cx="666.1" cy="354.0" rx="1.5" ry="1.0" fill="#d4ccbe" opacity="0.55"/>
<ellipse cx="687.2" cy="426.2" rx="2.0" ry="0.8" fill="#6a6256" opacity="0.77"/>
<ellipse cx="660.8" cy="384.0" rx="1.4" ry="1.6" fill="#4a4640" opacity="0.70"/>
<ellipse cx="687.9" cy="331.6" rx="2.1" ry="1.9" fill="#5e584e" opacity="0.59"/>
<ellipse cx="660.3" cy="377.8" rx="1.0" ry="1.7" fill="#d4ccbe" opacity="0.77"/>
<ellipse cx="683.5" cy="322.2" rx="1.1" ry="1.4" fill="#4a4640" opacity="0.60"/>
<ellipse cx="650.8" cy="349.4" rx="1.6" ry="1.2" fill="#7a6e5c" opacity="0.58"/>
<ellipse cx="652.2" cy="326.9" rx="1.8" ry="1.2" fill="#5e584e" opacity="0.64"/>
<ellipse cx="677.1" cy="327.2" rx="1.5" ry="1.3" fill="#3a3834" opacity="0.54"/>
<ellipse cx="671.3" cy="412.2" rx="1.7" ry="1.0" fill="#d4ccbe" opacity="0.84"/>
<ellipse cx="673.4" cy="409.4" rx="2.0" ry="1.0" fill="#6a6256" opacity="0.74"/>
<ellipse cx="687.7" cy="389.9" rx="0.9" ry="1.3" fill="#d4ccbe" opacity="0.51"/>
<ellipse cx="682.9" cy="351.6" rx="2.1" ry="1.5" fill="#d4ccbe" opacity="0.52"/>
<ellipse cx="668.0" cy="427.5" rx="1.8" ry="1.4" fill="#7a6e5c" opacity="0.57"/>
<ellipse cx="662.6" cy="334.7" rx="2.0" ry="1.4" fill="#d4ccbe" opacity="0.52"/>
<ellipse cx="687.1" cy="416.9" rx="0.9" ry="1.1" fill="#5e584e" opacity="0.76"/>
<ellipse cx="683.9" cy="359.2" rx="1.8" ry="1.6" fill="#6a6256" opacity="0.75"/>
<ellipse cx="660.7" cy="398.3" rx="2.0" ry="1.1" fill="#6a6256" opacity="0.84"/>
<ellipse cx="676.9" cy="427.1" rx="1.7" ry="1.5" fill="#6a6256" opacity="0.45"/>
<ellipse cx="669.2" cy="346.6" rx="1.2" ry="1.1" fill="#7a6e5c" opacity="0.65"/>
<ellipse cx="675.0" cy="358.6" rx="1.7" ry="1.7" fill="#6a6256" opacity="0.78"/>
<ellipse cx="660.1" cy="414.1" rx="1.4" ry="1.2" fill="#7a6e5c" opacity="0.58"/>
<ellipse cx="650.5" cy="429.7" rx="2.0" ry="1.9" fill="#5e584e" opacity="0.64"/>
<ellipse cx="675.8" cy="400.0" rx="1.4" ry="1.5" fill="#7a6e5c" opacity="0.82"/>
<ellipse cx="667.8" cy="424.8" rx="1.7" ry="1.7" fill="#6a6256" opacity="0.70"/>
<ellipse cx="677.1" cy="321.1" rx="1.6" ry="1.5" fill="#5e584e" opacity="0.52"/>
<ellipse cx="678.9" cy="338.6" rx="0.9" ry="1.4" fill="#7a6e5c" opacity="0.54"/>
<ellipse cx="646.5" cy="333.2" rx="2.2" ry="1.4" fill="#6a6256" opacity="0.67"/>
<ellipse cx="663.1" cy="358.0" rx="1.7" ry="1.5" fill="#7a6e5c" opacity="0.55"/>
<ellipse cx="685.5" cy="318.1" rx="2.1" ry="1.8" fill="#d4ccbe" opacity="0.80"/>
<ellipse cx="675.7" cy="380.4" rx="1.6" ry="1.2" fill="#4a4640" opacity="0.57"/>
<ellipse cx="667.6" cy="426.4" rx="2.1" ry="1.8" fill="#6a6256" opacity="0.62"/>
<ellipse cx="681.4" cy="391.2" rx="1.5" ry="1.0" fill="#6a6256" opacity="0.60"/>
<ellipse cx="665.9" cy="340.7" rx="1.7" ry="1.2" fill="#5e584e" opacity="0.81"/>
<ellipse cx="644.0" cy="330.3" rx="2.1" ry="1.4" fill="#3a3834" opacity="0.58"/>
<ellipse cx="684.3" cy="382.3" rx="1.4" ry="1.1" fill="#d4ccbe" opacity="0.57"/>
<ellipse cx="688.7" cy="361.3" rx="1.6" ry="1.1" fill="#5e584e" opacity="0.84"/>
<ellipse cx="666.8" cy="365.4" rx="2.1" ry="1.2" fill="#6a6256" opacity="0.82"/>
<ellipse cx="650.6" cy="320.7" rx="1.7" ry="1.3" fill="#7a6e5c" opacity="0.57"/>
<ellipse cx="680.0" cy="412.3" rx="1.5" ry="1.5" fill="#4a4640" opacity="0.55"/>
<ellipse cx="665.8" cy="322.2" rx="1.2" ry="1.0" fill="#d4ccbe" opacity="0.85"/>
<ellipse cx="657.5" cy="387.3" rx="1.5" ry="1.8" fill="#d4ccbe" opacity="0.80"/>
<ellipse cx="685.2" cy="319.8" rx="1.2" ry="1.4" fill="#5e584e" opacity="0.58"/>
<ellipse cx="657.7" cy="378.4" rx="1.3" ry="1.6" fill="#d4ccbe" opacity="0.78"/>
<ellipse cx="650.1" cy="318.3" rx="1.4" ry="1.9" fill="#3a3834" opacity="0.81"/>
<ellipse cx="669.1" cy="319.7" rx="1.6" ry="1.6" fill="#d4ccbe" opacity="0.83"/>
<ellipse cx="673.8" cy="415.9" rx="1.5" ry="1.6" fill="#d4ccbe" opacity="0.74"/>
<ellipse cx="685.3" cy="371.0" rx="1.2" ry="0.8" fill="#4a4640" opacity="0.76"/>
<ellipse cx="670.8" cy="391.9" rx="2.1" ry="1.0" fill="#d4ccbe" opacity="0.64"/>
<ellipse cx="669.3" cy="374.7" rx="1.6" ry="1.3" fill="#6a6256" opacity="0.67"/>
<ellipse cx="646.2" cy="401.5" rx="1.9" ry="1.8" fill="#6a6256" opacity="0.72"/>
<ellipse cx="645.2" cy="400.4" rx="2.2" ry="1.6" fill="#4a4640" opacity="0.47"/>
<ellipse cx="682.7" cy="343.0" rx="2.0" ry="0.9" fill="#7a6e5c" opacity="0.81"/>
<ellipse cx="689.7" cy="398.5" rx="1.0" ry="1.5" fill="#d4ccbe" opacity="0.62"/>
<ellipse cx="651.4" cy="389.0" rx="1.6" ry="1.6" fill="#4a4640" opacity="0.75"/>
<ellipse cx="656.9" cy="383.1" rx="1.8" ry="1.9" fill="#4a4640" opacity="0.50"/>
<ellipse cx="663.9" cy="353.9" rx="1.5" ry="1.2" fill="#3a3834" opacity="0.71"/>
<ellipse cx="686.1" cy="333.8" rx="1.0" ry="1.6" fill="#6a6256" opacity="0.65"/>
<ellipse cx="685.9" cy="381.3" rx="1.1" ry="0.9" fill="#3a3834" opacity="0.54"/>
<ellipse cx="682.3" cy="350.3" rx="1.9" ry="1.8" fill="#5e584e" opacity="0.63"/>
<ellipse cx="661.9" cy="333.0" rx="1.7" ry="0.9" fill="#4a4640" opacity="0.72"/>
<ellipse cx="648.2" cy="332.2" rx="1.4" ry="1.3" fill="#3a3834" opacity="0.64"/>
<ellipse cx="688.3" cy="330.3" rx="0.8" ry="1.7" fill="#3a3834" opacity="0.47"/>
<ellipse cx="650.9" cy="426.5" rx="1.9" ry="1.7" fill="#7a6e5c" opacity="0.48"/>
<ellipse cx="685.9" cy="374.0" rx="1.0" ry="1.5" fill="#5e584e" opacity="0.59"/>
<ellipse cx="654.8" cy="356.0" rx="1.8" ry="1.8" fill="#3a3834" opacity="0.60"/>
<ellipse cx="677.2" cy="358.8" rx="1.9" ry="1.3" fill="#6a6256" opacity="0.79"/>
<ellipse cx="667.8" cy="385.6" rx="1.1" ry="1.0" fill="#3a3834" opacity="0.48"/>
<ellipse cx="645.7" cy="339.2" rx="0.9" ry="1.9" fill="#5e584e" opacity="0.64"/>
<ellipse cx="679.0" cy="318.1" rx="1.2" ry="1.9" fill="#d4ccbe" opacity="0.82"/>
<ellipse cx="658.9" cy="370.7" rx="1.0" ry="1.0" fill="#5e584e" opacity="0.60"/>
<ellipse cx="661.7" cy="418.4" rx="1.6" ry="0.9" fill="#5e584e" opacity="0.78"/>
<ellipse cx="678.5" cy="394.6" rx="1.5" ry="0.8" fill="#4a4640" opacity="0.82"/>
<ellipse cx="661.0" cy="424.9" rx="0.8" ry="1.3" fill="#7a6e5c" opacity="0.79"/>
<ellipse cx="651.2" cy="407.5" rx="1.2" ry="1.6" fill="#6a6256" opacity="0.74"/>
<ellipse cx="651.5" cy="340.9" rx="1.6" ry="1.6" fill="#4a4640" opacity="0.70"/>
<ellipse cx="685.9" cy="398.6" rx="1.2" ry="1.4" fill="#7a6e5c" opacity="0.56"/>
<ellipse cx="677.7" cy="399.8" rx="1.9" ry="1.0" fill="#5e584e" opacity="0.53"/>
<ellipse cx="646.0" cy="387.4" rx="2.2" ry="0.8" fill="#7a6e5c" opacity="0.47"/>
<ellipse cx="679.8" cy="364.8" rx="0.8" ry="1.8" fill="#4a4640" opacity="0.78"/>
<ellipse cx="670.0" cy="425.1" rx="0.9" ry="1.9" fill="#7a6e5c" opacity="0.65"/>
<ellipse cx="687.0" cy="324.1" rx="1.7" ry="1.4" fill="#5e584e" opacity="0.76"/>
<ellipse cx="646.2" cy="413.0" rx="1.2" ry="0.9" fill="#d4ccbe" opacity="0.47"/>
<ellipse cx="688.7" cy="338.5" rx="1.7" ry="1.0" fill="#3a3834" opacity="0.54"/>
<ellipse cx="686.6" cy="408.2" rx="1.6" ry="1.9" fill="#4a4640" opacity="0.69"/>
<ellipse cx="683.4" cy="342.4" rx="1.4" ry="1.2" fill="#4a4640" opacity="0.62"/>
<ellipse cx="679.3" cy="377.5" rx="1.8" ry="1.9" fill="#5e584e" opacity="0.57"/>
<ellipse cx="664.7" cy="412.2" rx="1.6" ry="1.0" fill="#5e584e" opacity="0.64"/>
<ellipse cx="679.9" cy="348.0" rx="1.2" ry="1.0" fill="#d4ccbe" opacity="0.48"/>
<ellipse cx="655.3" cy="327.6" rx="2.2" ry="1.6" fill="#d4ccbe" opacity="0.56"/>
<ellipse cx="666.7" cy="346.4" rx="1.1" ry="1.1" fill="#7a6e5c" opacity="0.60"/>
<ellipse cx="648.5" cy="365.9" rx="1.3" ry="1.7" fill="#6a6256" opacity="0.45"/>
<ellipse cx="657.2" cy="425.2" rx="1.6" ry="1.3" fill="#5e584e" opacity="0.78"/>
<ellipse cx="674.2" cy="426.8" rx="0.9" ry="1.3" fill="#7a6e5c" opacity="0.49"/>
<ellipse cx="681.0" cy="382.1" rx="0.9" ry="1.0" fill="#6a6256" opacity="0.56"/>
<ellipse cx="675.1" cy="350.5" rx="1.6" ry="1.7" fill="#4a4640" opacity="0.46"/>
<ellipse cx="649.6" cy="428.5" rx="1.4" ry="1.1" fill="#6a6256" opacity="0.83"/>
<ellipse cx="644.8" cy="378.1" rx="1.3" ry="1.2" fill="#5e584e" opacity="0.45"/>
<ellipse cx="670.9" cy="412.3" rx="2.2" ry="1.1" fill="#7a6e5c" opacity="0.69"/>
<ellipse cx="673.0" cy="334.4" rx="1.9" ry="0.9" fill="#d4ccbe" opacity="0.58"/>
<ellipse cx="686.1" cy="370.6" rx="1.0" ry="0.9" fill="#d4ccbe" opacity="0.72"/>
<ellipse cx="651.4" cy="372.0" rx="1.6" ry="0.9" fill="#d4ccbe" opacity="0.78"/>
<ellipse cx="663.3" cy="324.0" rx="0.8" ry="1.5" fill="#4a4640" opacity="0.64"/>
<ellipse cx="684.6" cy="362.8" rx="1.1" ry="1.8" fill="#5e584e" opacity="0.57"/>
<ellipse cx="667.7" cy="405.2" rx="1.3" ry="1.8" fill="#5e584e" opacity="0.78"/>
<ellipse cx="674.5" cy="421.6" rx="1.7" ry="1.3" fill="#4a4640" opacity="0.51"/>
<ellipse cx="682.3" cy="373.9" rx="0.9" ry="1.3" fill="#4a4640" opacity="0.75"/>
<ellipse cx="656.9" cy="423.0" rx="1.5" ry="1.4" fill="#6a6256" opacity="0.66"/>
<ellipse cx="648.2" cy="340.7" rx="0.8" ry="1.4" fill="#7a6e5c" opacity="0.68"/>
<ellipse cx="652.5" cy="362.4" rx="1.7" ry="1.5" fill="#6a6256" opacity="0.66"/>
<ellipse cx="667.1" cy="380.2" rx="1.4" ry="2.0" fill="#7a6e5c" opacity="0.78"/>
<ellipse cx="686.5" cy="397.0" rx="0.9" ry="1.0" fill="#7a6e5c" opacity="0.62"/>
<ellipse cx="688.1" cy="320.3" rx="1.1" ry="1.1" fill="#3a3834" opacity="0.46"/>
<ellipse cx="679.6" cy="387.6" rx="1.4" ry="2.0" fill="#7a6e5c" opacity="0.46"/>
<ellipse cx="686.7" cy="344.7" rx="1.9" ry="1.6" fill="#4a4640" opacity="0.83"/>
<ellipse cx="685.3" cy="396.4" rx="1.6" ry="1.5" fill="#7a6e5c" opacity="0.64"/>
<ellipse cx="648.2" cy="331.8" rx="2.2" ry="1.5" fill="#6a6256" opacity="0.61"/>
<ellipse cx="644.1" cy="362.5" rx="1.9" ry="1.4" fill="#5e584e" opacity="0.53"/>
<ellipse cx="675.2" cy="354.6" rx="1.0" ry="1.6" fill="#6a6256" opacity="0.67"/>
<ellipse cx="676.9" cy="360.6" rx="1.1" ry="1.2" fill="#4a4640" opacity="0.56"/>
<ellipse cx="672.6" cy="420.3" rx="0.9" ry="1.3" fill="#5e584e" opacity="0.52"/>
<ellipse cx="674.2" cy="383.0" rx="2.0" ry="1.9" fill="#7a6e5c" opacity="0.74"/>
<ellipse cx="663.2" cy="366.5" rx="1.6" ry="1.1" fill="#3a3834" opacity="0.62"/>
<ellipse cx="647.9" cy="419.4" rx="1.1" ry="0.8" fill="#6a6256" opacity="0.50"/>
<ellipse cx="669.9" cy="386.8" rx="1.4" ry="1.2" fill="#5e584e" opacity="0.49"/>
<ellipse cx="680.2" cy="355.6" rx="0.9" ry="1.4" fill="#4a4640" opacity="0.78"/>
<ellipse cx="688.0" cy="354.3" rx="1.7" ry="1.9" fill="#d4ccbe" opacity="0.54"/>
<ellipse cx="676.1" cy="413.8" rx="2.0" ry="0.8" fill="#d4ccbe" opacity="0.72"/>
<ellipse cx="649.1" cy="356.3" rx="1.7" ry="0.9" fill="#6a6256" opacity="0.75"/>
<ellipse cx="677.9" cy="411.1" rx="1.8" ry="1.9" fill="#5e584e" opacity="0.83"/>
<ellipse cx="672.8" cy="428.0" rx="1.3" ry="1.8" fill="#4a4640" opacity="0.53"/>
<ellipse cx="658.9" cy="337.7" rx="2.2" ry="1.7" fill="#7a6e5c" opacity="0.55"/>
<ellipse cx="687.3" cy="371.1" rx="1.0" ry="1.5" fill="#4a4640" opacity="0.60"/>
<ellipse cx="675.5" cy="374.5" rx="2.1" ry="0.9" fill="#6a6256" opacity="0.75"/>
<ellipse cx="677.2" cy="351.7" rx="1.9" ry="2.0" fill="#4a4640" opacity="0.75"/>
<ellipse cx="653.0" cy="357.2" rx="1.2" ry="1.4" fill="#5e584e" opacity="0.73"/>
<ellipse cx="680.3" cy="383.6" rx="1.4" ry="1.9" fill="#6a6256" opacity="0.48"/>
<ellipse cx="663.9" cy="343.1" rx="1.2" ry="1.7" fill="#5e584e" opacity="0.51"/>
<ellipse cx="688.5" cy="381.1" rx="2.2" ry="1.4" fill="#d4ccbe" opacity="0.60"/>
<ellipse cx="687.0" cy="328.5" rx="1.0" ry="0.9" fill="#6a6256" opacity="0.78"/>
<ellipse cx="650.5" cy="410.4" rx="1.2" ry="1.3" fill="#4a4640" opacity="0.60"/>
<ellipse cx="667.8" cy="324.1" rx="1.1" ry="1.8" fill="#5e584e" opacity="0.45"/>
<ellipse cx="667.9" cy="427.0" rx="2.1" ry="1.6" fill="#3a3834" opacity="0.65"/>
<ellipse cx="646.4" cy="362.8" rx="1.4" ry="1.5" fill="#3a3834" opacity="0.81"/>
<ellipse cx="673.7" cy="390.5" rx="1.1" ry="1.3" fill="#4a4640" opacity="0.74"/>
<ellipse cx="681.4" cy="411.9" rx="2.1" ry="1.3" fill="#d4ccbe" opacity="0.85"/>
<ellipse cx="678.8" cy="419.7" rx="1.2" ry="1.0" fill="#5e584e" opacity="0.78"/>
<ellipse cx="647.5" cy="360.1" rx="1.4" ry="1.1" fill="#d4ccbe" opacity="0.64"/>
<ellipse cx="657.2" cy="394.0" rx="1.9" ry="1.7" fill="#4a4640" opacity="0.48"/>
<ellipse cx="675.6" cy="322.1" rx="2.0" ry="1.0" fill="#d4ccbe" opacity="0.46"/>
<ellipse cx="682.1" cy="427.5" rx="1.4" ry="1.4" fill="#3a3834" opacity="0.48"/>
<ellipse cx="660.8" cy="388.6" rx="1.1" ry="1.3" fill="#4a4640" opacity="0.56"/>
<ellipse cx="678.7" cy="360.5" rx="1.0" ry="1.4" fill="#5e584e" opacity="0.84"/>
<ellipse cx="676.3" cy="328.3" rx="0.9" ry="1.3" fill="#4a4640" opacity="0.57"/>
<ellipse cx="685.7" cy="380.4" rx="2.2" ry="1.1" fill="#d4ccbe" opacity="0.68"/>
<ellipse cx="656.1" cy="380.2" rx="1.3" ry="1.1" fill="#7a6e5c" opacity="0.72"/>
<ellipse cx="646.6" cy="319.7" rx="1.4" ry="1.4" fill="#5e584e" opacity="0.69"/>
<ellipse cx="680.5" cy="324.4" rx="1.1" ry="1.6" fill="#3a3834" opacity="0.80"/>
<ellipse cx="679.7" cy="381.6" rx="1.4" ry="1.6" fill="#d4ccbe" opacity="0.82"/>
<ellipse cx="661.0" cy="378.4" rx="1.6" ry="1.5" fill="#7a6e5c" opacity="0.61"/>
<ellipse cx="661.4" cy="414.5" rx="2.1" ry="0.9" fill="#3a3834" opacity="0.63"/>
<rect x="653.60" y="317.90" width="21.40" height="10.70" fill="#8a8a8a" />
<rect x="625.00" y="348.00" width="15.50" height="22.00" fill="#6e7478" />
<rect x="694.50" y="318.00" width="2.00" height="118.00" fill="#5a5e60" />
<rect x="697.00" y="330.00" width="8.00" height="15.00" fill="#c8c8c8" />
<rect x="697.00" y="360.00" width="8.00" height="12.00" fill="#d0d0d0" />
<rect x="705.00" y="322.50" width="20.00" height="16.30" fill="#8a8a8a" />
<rect x="705.00" y="322.50" width="15.00" height="3.50" fill="#e0e0e0" />
<rect x="725.00" y="322.50" width="35.00" height="16.30" fill="#6a6660" />
<rect x="728.00" y="325.00" width="10.00" height="8.00" fill="#d8d8d8" />
<rect x="705.00" y="340.00" width="57.50" height="11.00" fill="#9aa0a8" />
<rect x="706.00" y="340.50" width="2.50" height="10.00" fill="#c8ccd0" opacity="0.8"/>
<rect x="710.60" y="340.50" width="2.50" height="10.00" fill="#c8ccd0" opacity="0.8"/>
<rect x="715.20" y="340.50" width="2.50" height="10.00" fill="#c8ccd0" opacity="0.8"/>
<rect x="719.80" y="340.50" width="2.50" height="10.00" fill="#c8ccd0" opacity="0.8"/>
<rect x="724.40" y="340.50" width="2.50" height="10.00" fill="#c8ccd0" opacity="0.8"/>
<rect x="729.00" y="340.50" width="2.50" height="10.00" fill="#c8ccd0" opacity="0.8"/>
<rect x="733.60" y="340.50" width="2.50" height="10.00" fill="#c8ccd0" opacity="0.8"/>
<rect x="738.20" y="340.50" width="2.50" height="10.00" fill="#c8ccd0" opacity="0.8"/>
<rect x="742.80" y="340.50" width="2.50" height="10.00" fill="#c8ccd0" opacity="0.8"/>
<rect x="747.40" y="340.50" width="2.50" height="10.00" fill="#c8ccd0" opacity="0.8"/>
<rect x="752.00" y="340.50" width="2.50" height="10.00" fill="#c8ccd0" opacity="0.8"/>
<rect x="756.60" y="340.50" width="2.50" height="10.00" fill="#c8ccd0" opacity="0.8"/>
<rect x="705.00" y="353.75" width="20.00" height="18.75" fill="#5e6064" />
<rect x="706.00" y="356.00" width="14.00" height="4.00" fill="#d8d8d8" />
<rect x="708.00" y="364.00" width="15.00" height="4.00" fill="#c0c0c0" />
<rect x="726.90" y="357.50" width="32.50" height="31.30" fill="#d8d8d8" />
<rect x="726.00" y="355.00" width="34.00" height="2.50" fill="#303438" />
<rect x="759.40" y="357.50" width="8.10" height="31.30" fill="#303438" />
<rect x="705.00" y="372.50" width="21.00" height="16.50" fill="#8a8478" />
<path d="M748,310 L798,318 L798,436 L790,436 L780,380 L768,338 L758,325 Z" fill="#9a968c"/>
<rect x="781.00" y="335.00" width="16.00" height="27.00" fill="#8a9098" />
<rect x="783.00" y="338.00" width="3.00" height="22.00" fill="#c0c4c8" />
<rect x="789.00" y="338.00" width="3.00" height="22.00" fill="#b0b4b8" />
<rect x="793.00" y="320.00" width="2.00" height="120.00" fill="#70747a" />
<rect x="554.80" y="375.00" width="11.90" height="64.00" fill="#9a9a98" />
<rect x="564.00" y="382.00" width="29.00" height="2.50" fill="#5a5e60" />
<rect x="566.70" y="384.50" width="25.00" height="27.50" fill="#d8d8d8" />
<rect x="591.70" y="382.00" width="2.30" height="30.00" fill="#5a5e60" />
<rect x="557.00" y="413.00" width="23.00" height="26.00" fill="#8a9098" />
<rect x="579.80" y="414.00" width="20.20" height="18.00" fill="#4a5a70" />
<rect x="596.00" y="375.00" width="10.00" height="65.00" fill="#8a8a80" />
<rect x="606.00" y="409.50" width="24.00" height="17.90" fill="#7a8088" />
<rect x="604.00" y="407.00" width="27.00" height="2.50" fill="#3a3e42" />
<rect x="606.00" y="375.00" width="27.00" height="34.00" fill="#bcb4a4" />
<rect x="631.00" y="375.00" width="46.00" height="59.50" fill="#a09482" />
<path d="M682,375 L687,375 L686.5,430 L683,434 Z" fill="#505454"/>
<rect x="658.06" y="405.61" width="1.84" height="2.78" fill="#c4bcae" opacity="0.73"/>
<rect x="633.37" y="398.89" width="2.73" height="2.74" fill="#c4bcae" opacity="0.63"/>
<rect x="622.10" y="401.42" width="4.10" height="1.79" fill="#5a5650" opacity="0.75"/>
<rect x="633.44" y="395.08" width="3.19" height="1.86" fill="#7a7266" opacity="0.45"/>
<rect x="625.09" y="377.39" width="2.86" height="3.07" fill="#7a7266" opacity="0.50"/>
<rect x="625.91" y="425.09" width="4.70" height="3.59" fill="#c4bcae" opacity="0.64"/>
<rect x="646.46" y="426.49" width="3.46" height="1.52" fill="#7a7266" opacity="0.42"/>
<rect x="664.04" y="403.69" width="1.59" height="2.53" fill="#5a5650" opacity="0.57"/>
<rect x="644.12" y="400.79" width="2.28" height="3.87" fill="#4a4844" opacity="0.44"/>
<rect x="612.35" y="414.31" width="1.65" height="3.29" fill="#5a5650" opacity="0.52"/>
<rect x="643.67" y="406.30" width="4.85" height="3.20" fill="#5a5650" opacity="0.51"/>
<rect x="635.55" y="393.10" width="2.55" height="1.50" fill="#c4bcae" opacity="0.70"/>
<rect x="643.07" y="426.51" width="2.83" height="3.14" fill="#c4bcae" opacity="0.78"/>
<rect x="629.39" y="410.26" width="1.81" height="2.38" fill="#c4bcae" opacity="0.43"/>
<rect x="636.91" y="410.81" width="2.11" height="1.85" fill="#c4bcae" opacity="0.60"/>
<rect x="654.73" y="401.04" width="2.70" height="1.54" fill="#4a4844" opacity="0.57"/>
<rect x="646.30" y="404.15" width="3.44" height="3.16" fill="#6e685e" opacity="0.57"/>
<rect x="661.33" y="422.81" width="3.66" height="1.99" fill="#7a7266" opacity="0.57"/>
<rect x="665.53" y="404.91" width="3.70" height="3.10" fill="#c4bcae" opacity="0.78"/>
<rect x="615.92" y="419.11" width="1.84" height="3.68" fill="#7a7266" opacity="0.51"/>
<rect x="659.39" y="386.01" width="2.84" height="3.09" fill="#4a4844" opacity="0.69"/>
<rect x="625.73" y="398.87" width="4.59" height="2.28" fill="#7a7266" opacity="0.52"/>
<rect x="630.93" y="431.94" width="1.72" height="2.25" fill="#c4bcae" opacity="0.47"/>
<rect x="672.15" y="420.27" width="2.92" height="2.65" fill="#4a4844" opacity="0.43"/>
<rect x="636.68" y="428.60" width="2.51" height="1.77" fill="#4a4844" opacity="0.60"/>
<rect x="671.46" y="428.97" width="2.83" height="1.93" fill="#c4bcae" opacity="0.50"/>
<rect x="649.82" y="381.32" width="2.83" height="1.79" fill="#4a4844" opacity="0.52"/>
<rect x="638.87" y="421.97" width="2.23" height="2.79" fill="#5a5650" opacity="0.77"/>
<rect x="633.96" y="411.50" width="2.64" height="3.53" fill="#6e685e" opacity="0.61"/>
<rect x="617.48" y="379.00" width="2.57" height="2.88" fill="#c4bcae" opacity="0.72"/>
<rect x="651.22" y="390.32" width="4.10" height="2.14" fill="#6e685e" opacity="0.59"/>
<rect x="659.58" y="409.87" width="3.59" height="2.64" fill="#6e685e" opacity="0.78"/>
<rect x="660.29" y="400.93" width="1.97" height="1.92" fill="#6e685e" opacity="0.44"/>
<rect x="638.35" y="410.70" width="4.31" height="2.70" fill="#6e685e" opacity="0.52"/>
<rect x="668.18" y="411.15" width="3.40" height="2.89" fill="#5a5650" opacity="0.48"/>
<rect x="609.61" y="408.35" width="3.74" height="2.72" fill="#c4bcae" opacity="0.75"/>
<rect x="670.52" y="391.80" width="1.70" height="2.22" fill="#7a7266" opacity="0.61"/>
<rect x="628.01" y="396.74" width="2.51" height="1.99" fill="#6e685e" opacity="0.78"/>
<rect x="610.23" y="403.30" width="2.59" height="3.63" fill="#6e685e" opacity="0.66"/>
<rect x="636.61" y="422.91" width="2.69" height="3.33" fill="#c4bcae" opacity="0.60"/>
<rect x="656.39" y="410.41" width="2.06" height="2.74" fill="#5a5650" opacity="0.40"/>
<rect x="661.78" y="419.20" width="1.65" height="2.84" fill="#7a7266" opacity="0.59"/>
<rect x="616.13" y="387.34" width="4.48" height="2.10" fill="#6e685e" opacity="0.73"/>
<rect x="652.27" y="397.55" width="3.76" height="3.80" fill="#6e685e" opacity="0.48"/>
<rect x="624.04" y="379.75" width="2.81" height="2.96" fill="#4a4844" opacity="0.49"/>
<rect x="614.38" y="407.22" width="4.15" height="2.61" fill="#4a4844" opacity="0.67"/>
<rect x="612.19" y="390.59" width="2.02" height="1.64" fill="#5a5650" opacity="0.41"/>
<rect x="660.09" y="381.95" width="4.61" height="3.75" fill="#c4bcae" opacity="0.59"/>
<rect x="627.66" y="380.17" width="3.68" height="3.59" fill="#4a4844" opacity="0.65"/>
<rect x="656.69" y="423.65" width="2.22" height="3.13" fill="#4a4844" opacity="0.58"/>
<rect x="642.16" y="430.23" width="2.20" height="2.84" fill="#7a7266" opacity="0.76"/>
<rect x="619.71" y="398.15" width="3.00" height="2.25" fill="#5a5650" opacity="0.69"/>
<rect x="634.43" y="385.30" width="4.63" height="3.22" fill="#5a5650" opacity="0.49"/>
<rect x="635.38" y="401.26" width="4.86" height="2.18" fill="#c4bcae" opacity="0.61"/>
<rect x="621.69" y="414.50" width="4.17" height="3.68" fill="#7a7266" opacity="0.77"/>
<rect x="661.93" y="399.30" width="4.59" height="3.28" fill="#4a4844" opacity="0.58"/>
<rect x="620.97" y="394.34" width="4.01" height="3.67" fill="#7a7266" opacity="0.42"/>
<rect x="663.84" y="430.31" width="2.78" height="1.74" fill="#6e685e" opacity="0.64"/>
<rect x="632.64" y="384.06" width="2.14" height="2.86" fill="#7a7266" opacity="0.68"/>
<rect x="672.47" y="417.60" width="3.13" height="3.57" fill="#4a4844" opacity="0.76"/>
<path d="M637,392 Q640,412 652,428" fill="none" stroke="#4e483e" stroke-width="2.2" opacity="0.7"/>
<path d="M655,372 Q668,378 676,372" fill="none" stroke="#5a5244" stroke-width="2" opacity="0.6"/>
<path d="M650,345 Q660,352 672,346" fill="none" stroke="#5a5244" stroke-width="1.8" opacity="0.55"/>
<path d="M664,400 Q668,418 660,432" fill="none" stroke="#4a4438" stroke-width="1.6" opacity="0.6"/>
<rect x="688.00" y="388.00" width="17.00" height="3.70" fill="#6a6e70" />
<rect x="705.00" y="390.00" width="9.80" height="30.00" fill="#3a3e42" />
<rect x="688.00" y="391.70" width="17.00" height="28.30" fill="#e0e0e0" />
<rect x="705.00" y="389.00" width="80.00" height="17.00" fill="#9a9080" />
<rect x="727.50" y="385.00" width="31.30" height="4.00" fill="#d8d8d8" />
<rect x="714.80" y="389.00" width="1.20" height="18.00" fill="#8a8478" />
<rect x="714.80" y="407.50" width="15.60" height="22.90" fill="#505458" />
<rect x="718.00" y="409.00" width="10.00" height="4.00" fill="#c8c8c8" />
<rect x="730.00" y="406.00" width="8.70" height="24.00" fill="#8a8a80" />
<rect x="738.75" y="412.50" width="25.00" height="15.00" fill="#404448" />
<rect x="763.75" y="408.75" width="21.25" height="16.25" fill="#c8c8c8" />
<rect x="762.00" y="406.00" width="24.00" height="2.75" fill="#3a3e42" />
<rect x="705.00" y="427.50" width="85.00" height="10.50" fill="#a0a0a0" />
<path d="M548,436 L798,434 L798,446 L548,447 Z" fill="#a6a6a2"/>
<rect x="548.00" y="446.00" width="81.00" height="46.00" fill="#a8a8a0" />
<path d="M556,446 L564,446 L572,490 L564,490 Z" fill="#7e8272" opacity="0.6"/>
<rect x="569.00" y="462.80" width="24.70" height="17.20" fill="#8a8c8e" />
<rect x="569.00" y="462.80" width="24.70" height="4.20" fill="#5a5e62" />
<rect x="593.75" y="445.00" width="6.25" height="36.70" fill="#d0d0d0" />
<rect x="600.00" y="445.00" width="11.00" height="36.70" fill="#8a9098" />
<rect x="611.00" y="445.00" width="6.70" height="36.70" fill="#303840" />
<rect x="593.00" y="443.50" width="24.00" height="3.50" fill="#303840" />
<rect x="548.00" y="490.00" width="81.00" height="17.00" fill="#8a8072" />
<rect x="575.00" y="492.00" width="45.00" height="15.00" fill="#7a7062" />
<rect x="548.00" y="492.00" width="14.50" height="15.00" fill="#4a5060" />
<rect x="617.70" y="446.00" width="11.30" height="61.00" fill="#b0aca4" />
<rect x="629.00" y="444.00" width="22.00" height="30.00" fill="#b0aca0" />
<rect x="651.00" y="444.00" width="19.00" height="60.60" fill="#8a8a88" />
<rect x="631.00" y="473.00" width="38.00" height="4.50" fill="#303840" />
<rect x="657.00" y="476.50" width="12.00" height="19.50" fill="#35404a" />
<rect x="629.00" y="477.50" width="28.00" height="25.00" fill="#9a9c98" />
<rect x="670.00" y="442.00" width="30.00" height="65.00" fill="#8e8a74" />
<rect x="700.00" y="446.00" width="4.00" height="61.00" fill="#a8a8a0" />
<rect x="703.75" y="443.75" width="13.75" height="21.25" fill="#d8d8d8" />
<rect x="717.50" y="443.75" width="6.25" height="24.25" fill="#2a3038" />
<rect x="723.75" y="443.75" width="8.75" height="24.25" fill="#b8b8b6" />
<rect x="704.00" y="465.00" width="7.00" height="42.00" fill="#8a8a78" />
<rect x="711.00" y="468.75" width="19.00" height="31.25" fill="#8a9098" />
<rect x="730.00" y="468.75" width="6.00" height="31.25" fill="#303438" />
<rect x="736.00" y="446.00" width="9.00" height="61.00" fill="#9a968a" />
<rect x="744.00" y="442.50" width="37.00" height="3.50" fill="#303438" />
<rect x="745.00" y="446.00" width="32.50" height="30.00" fill="#cacaca" />
<rect x="751.00" y="446.00" width="6.00" height="30.00" fill="#a0a0a0" />
<rect x="764.00" y="446.00" width="6.00" height="30.00" fill="#a8a8a8" />
<rect x="777.50" y="442.50" width="5.00" height="34.50" fill="#303438" />
<rect x="736.00" y="477.50" width="62.00" height="29.50" fill="#7e786c" />
<rect x="782.50" y="442.00" width="15.50" height="35.50" fill="#9a9080" />
<rect x="748.00" y="482.00" width="42.00" height="21.00" fill="#6e685e" opacity="0.6"/>
<rect x="704.00" y="500.00" width="32.00" height="7.00" fill="#7a7468" />
</g>
<filter id="tx" x="0" y="0" width="100%" height="100%"><feTurbulence type="fractalNoise" baseFrequency="0.28" numOctaves="2" seed="4"/><feColorMatrix type="matrix" values="0 0 0 0 0.12  0 0 0 0 0.11  0 0 0 0 0.1  2.2 0 0 0 -1.0"/></filter>
<filter id="tx2" x="0" y="0" width="100%" height="100%"><feTurbulence type="fractalNoise" baseFrequency="0.4" numOctaves="1" seed="9"/><feColorMatrix type="matrix" values="0 0 0 0 0.92  0 0 0 0 0.9  0 0 0 0 0.86  2.4 0 0 0 -1.25"/></filter>
<rect x="550" y="240.5" width="248" height="266.0" filter="url(#tx)" opacity="0.45"/>
<rect x="550" y="240.5" width="248" height="266.0" filter="url(#tx2)" opacity="0.3"/>
</svg>
<path d="M554.4,376 L554.4,323.5 Q555,307 568,306.2 L631,308.4 L664,311 L700,315 L755,321.9 Q762,324 765.5,330 L775,351 L787.5,390 L793.5,413 Q795,431 786.7,436.2 L703,436.7 L631,440.3 L568.8,441.3 Q557,441 554.3,432.5 Z" fill="none" stroke="#44dd44" stroke-width="1.6"/>
<path d="M552.2,376 L552.2,323 Q553,304 568,303.7 L631.3,306.8 L680,314.1 L700,317.5 L752.5,323.75 Q759,325.5 763,331.5 L772.5,351.25 L786,390 L795.5,414 Q798,434 788,437.6 L703.75,438.75 L631.3,441.9 L568.8,442.9 Q556,443 552.2,432.5 Z" fill="none" stroke="#f23a26" stroke-width="2.1"/>
<rect x="661" y="305.6" width="4" height="12" rx="2" fill="#a8d0f4" stroke="#6a9ad8" stroke-width="0.5"/>
<rect x="699.6" y="432.8" width="3.4" height="11.5" rx="1.6" fill="#a0c8f0" stroke="#6a9ad8" stroke-width="0.5"/>
<rect x="660.40" y="437.80" width="3.20" height="6.20" fill="#30e040" />
<line x1="575.80" y1="94.60" x2="575.80" y2="240.50" stroke="#767676" stroke-width="0.7" />
<line x1="575.80" y1="240.50" x2="575.80" y2="506.50" stroke="#000" stroke-width="0.7" opacity="0.22"/>
<line x1="575.80" y1="506.50" x2="575.80" y2="653.60" stroke="#767676" stroke-width="0.7" />
<line x1="630.10" y1="94.60" x2="630.10" y2="240.50" stroke="#767676" stroke-width="0.7" />
<line x1="630.10" y1="240.50" x2="630.10" y2="506.50" stroke="#000" stroke-width="0.7" opacity="0.22"/>
<line x1="630.10" y1="506.50" x2="630.10" y2="653.60" stroke="#767676" stroke-width="0.7" />
<line x1="684.40" y1="94.60" x2="684.40" y2="240.50" stroke="#767676" stroke-width="0.7" />
<line x1="684.40" y1="240.50" x2="684.40" y2="506.50" stroke="#000" stroke-width="0.7" opacity="0.22"/>
<line x1="684.40" y1="506.50" x2="684.40" y2="653.60" stroke="#767676" stroke-width="0.7" />
<line x1="738.70" y1="94.60" x2="738.70" y2="240.50" stroke="#767676" stroke-width="0.7" />
<line x1="738.70" y1="240.50" x2="738.70" y2="506.50" stroke="#000" stroke-width="0.7" opacity="0.22"/>
<line x1="738.70" y1="506.50" x2="738.70" y2="653.60" stroke="#767676" stroke-width="0.7" />
<line x1="793.00" y1="94.60" x2="793.00" y2="240.50" stroke="#767676" stroke-width="0.7" />
<line x1="793.00" y1="240.50" x2="793.00" y2="506.50" stroke="#000" stroke-width="0.7" opacity="0.22"/>
<line x1="793.00" y1="506.50" x2="793.00" y2="653.60" stroke="#767676" stroke-width="0.7" />
<line x1="549.80" y1="105.70" x2="798.80" y2="105.70" stroke="#767676" stroke-width="0.7" />
<line x1="549.80" y1="127.92" x2="798.80" y2="127.92" stroke="#767676" stroke-width="0.7" />
<line x1="549.80" y1="150.14" x2="798.80" y2="150.14" stroke="#767676" stroke-width="0.7" />
<line x1="549.80" y1="172.36" x2="798.80" y2="172.36" stroke="#767676" stroke-width="0.7" />
<line x1="549.80" y1="194.58" x2="798.80" y2="194.58" stroke="#767676" stroke-width="0.7" />
<line x1="549.80" y1="216.80" x2="798.80" y2="216.80" stroke="#767676" stroke-width="0.7" />
<line x1="549.80" y1="239.02" x2="798.80" y2="239.02" stroke="#767676" stroke-width="0.7" />
<line x1="550.00" y1="261.24" x2="798.00" y2="261.24" stroke="#000" stroke-width="0.7" opacity="0.22"/>
<line x1="550.00" y1="283.46" x2="798.00" y2="283.46" stroke="#000" stroke-width="0.7" opacity="0.22"/>
<line x1="550.00" y1="305.68" x2="798.00" y2="305.68" stroke="#000" stroke-width="0.7" opacity="0.22"/>
<line x1="550.00" y1="327.90" x2="798.00" y2="327.90" stroke="#000" stroke-width="0.7" opacity="0.22"/>
<line x1="550.00" y1="350.12" x2="798.00" y2="350.12" stroke="#000" stroke-width="0.7" opacity="0.22"/>
<line x1="550.00" y1="372.34" x2="798.00" y2="372.34" stroke="#000" stroke-width="0.7" opacity="0.22"/>
<line x1="550.00" y1="394.56" x2="798.00" y2="394.56" stroke="#000" stroke-width="0.7" opacity="0.22"/>
<line x1="550.00" y1="416.78" x2="798.00" y2="416.78" stroke="#000" stroke-width="0.7" opacity="0.22"/>
<line x1="550.00" y1="439.00" x2="798.00" y2="439.00" stroke="#000" stroke-width="0.7" opacity="0.22"/>
<line x1="550.00" y1="461.22" x2="798.00" y2="461.22" stroke="#000" stroke-width="0.7" opacity="0.22"/>
<line x1="550.00" y1="483.44" x2="798.00" y2="483.44" stroke="#000" stroke-width="0.7" opacity="0.22"/>
<line x1="550.00" y1="505.66" x2="798.00" y2="505.66" stroke="#000" stroke-width="0.7" opacity="0.22"/>
<line x1="549.80" y1="527.88" x2="798.80" y2="527.88" stroke="#767676" stroke-width="0.7" />
<line x1="549.80" y1="550.10" x2="798.80" y2="550.10" stroke="#767676" stroke-width="0.7" />
<line x1="549.80" y1="572.32" x2="798.80" y2="572.32" stroke="#767676" stroke-width="0.7" />
<line x1="549.80" y1="594.54" x2="798.80" y2="594.54" stroke="#767676" stroke-width="0.7" />
<line x1="549.80" y1="616.76" x2="798.80" y2="616.76" stroke="#767676" stroke-width="0.7" />
<line x1="549.80" y1="638.98" x2="798.80" y2="638.98" stroke="#767676" stroke-width="0.7" />
<polyline points="116.05,113.54 117.05,113.59 118.05,113.35 119.05,113.36 120.05,113.24 121.05,112.77 122.05,112.60 123.05,112.96 124.05,112.48 125.05,112.33 126.05,112.66 127.05,112.38 128.05,112.78 129.05,112.74 130.05,113.01 131.05,112.90 132.05,113.36 133.05,113.68 134.05,113.65 135.05,113.96 136.05,114.10 137.05,113.91 138.05,114.61 139.05,114.89 140.05,115.09 141.05,115.31 142.05,116.19 143.05,116.33 144.05,116.85 145.05,117.33 146.05,117.60 147.05,118.11 148.05,118.17 149.05,119.04 150.05,119.65 151.05,120.78 152.05,121.57 153.05,121.94 154.05,122.79 155.05,123.67 156.05,124.95 157.05,125.66 158.05,127.27 159.05,128.57 160.05,130.19 161.05,131.62 162.05,133.09 163.05,134.73 164.05,136.23 165.05,137.93 166.05,139.45 167.05,141.25 168.05,142.86 169.05,144.60 170.05,146.06 171.05,147.33 172.05,149.26 173.05,150.83 174.05,152.30 175.05,153.61 176.05,155.13 177.05,154.83 178.05,155.20 179.05,155.04 180.05,154.87 181.05,154.66 182.05,153.62 183.05,152.18 184.05,150.13 185.05,149.04 186.05,147.29 187.05,145.60 188.05,143.93 189.05,142.46 190.05,140.77 191.05,138.52 192.05,137.11 193.05,135.32 194.05,134.53 195.05,133.10 196.05,132.23 197.05,131.10 198.05,129.62 199.05,128.72 200.05,128.05 201.05,128.17 202.05,128.73 203.05,128.65 204.05,129.00 205.05,129.29 206.05,129.07 207.05,128.46 208.05,128.05 209.05,128.20 210.05,127.53 211.05,127.58 212.05,127.20 213.05,126.54 214.05,126.31 215.05,126.07 216.05,125.87 217.05,125.56 218.05,125.26 219.05,125.02 220.05,124.93 221.05,124.39 222.05,124.07 223.05,124.15 224.05,124.36 225.05,124.89 226.05,125.78 227.05,126.00 228.05,126.51 229.05,128.01 230.05,130.53 231.05,132.90 232.05,134.84 233.05,137.48 234.05,139.98 235.05,142.64 236.05,145.98 237.05,148.88 238.05,152.01 239.05,154.81 240.05,156.95 241.05,158.62 242.05,159.85 243.05,161.52 244.05,163.55 245.05,164.91 246.05,164.57 247.05,164.78 248.05,164.96 249.05,164.88 250.05,165.00 251.05,163.99 252.05,162.78 253.05,161.67 254.05,160.25 255.05,159.05 256.05,157.71 257.05,154.93 258.05,152.92 259.05,150.69 260.05,148.10 261.05,145.72 262.05,143.73 263.05,141.06 264.05,138.74 265.05,137.52 266.05,136.30 267.05,134.57 268.05,133.33 269.05,131.97 270.05,130.90 271.05,129.29 272.05,128.16 273.05,126.38 274.05,125.11 275.05,124.01 276.05,124.47 277.05,124.54 278.05,124.73 279.05,125.00 280.05,125.57 281.05,125.69 282.05,126.39 283.05,126.74 284.05,126.53 285.05,126.73 286.05,127.19 287.05,127.24 288.05,127.48 289.05,127.35 290.05,127.36 291.05,127.61 292.05,128.05 293.05,127.82 294.05,127.58 295.05,127.33 296.05,127.05 297.05,126.76 298.05,126.78 299.05,126.03 300.05,125.65 301.05,125.93 302.05,125.61 303.05,125.35 304.05,124.68 305.05,124.64 306.05,124.29 307.05,123.52 308.05,123.49 309.05,123.20 310.05,122.75 311.05,122.32 312.05,121.84 313.05,121.85 314.05,121.79 315.05,121.69 316.05,122.00 317.05,121.82 318.05,122.14 319.05,121.68 320.05,122.19 321.05,122.07 322.05,122.20 323.05,122.19 324.05,122.19 325.05,122.00 326.05,121.66 327.05,122.10 328.05,121.75 329.05,121.83 330.05,122.05 331.05,121.97 332.05,121.90 333.05,122.22 334.05,122.03 335.05,121.87 336.05,121.82 337.05,122.18 338.05,121.95 339.05,122.14 340.05,121.88 341.05,121.79 342.05,122.00 343.05,122.17 344.05,121.78 345.05,122.16 346.05,122.24 347.05,122.17 348.05,122.18 349.05,121.70 350.05,122.07 351.05,122.21 352.05,121.73 353.05,122.39 354.05,123.10 355.05,123.96 356.05,124.61 357.05,125.34 358.05,126.23 359.05,126.47 360.05,127.21 361.05,127.96 362.05,128.67 363.05,129.59 364.05,131.14 365.05,132.07 366.05,132.62 367.05,133.87 368.05,134.76 369.05,135.77 370.05,136.79 371.05,137.97 372.05,138.94 373.05,139.81 374.05,140.71 375.05,142.09 376.05,144.14 377.05,146.58 378.05,148.85 379.05,150.83 380.05,152.82 381.05,155.06 382.05,157.55 383.05,161.21 384.05,164.83 385.05,168.11 386.05,171.88 387.05,175.29 388.05,178.81 389.05,182.51 390.05,186.32 391.05,189.33 392.05,187.18 393.05,185.38 394.05,183.26 395.05,180.45 396.05,177.36 397.05,174.20 398.05,170.56 399.05,167.51 400.05,164.25 401.05,161.26 402.05,158.03 403.05,154.43 404.05,151.48 405.05,149.54 406.05,148.09 407.05,147.07 408.05,145.74 409.05,145.02 410.05,143.79 411.05,142.79 412.05,141.60 413.05,140.39 414.05,139.30 415.05,138.06 416.05,136.90 417.05,136.61 418.05,135.68 419.05,135.19 420.05,134.98 421.05,133.97 422.05,133.41 423.05,132.84 424.05,132.73 425.05,131.73 426.05,131.05 427.05,130.97 428.05,129.95 429.05,129.81 430.05,129.12 431.05,128.64 432.05,128.13 433.05,127.56 434.05,127.52 435.05,126.90 436.05,127.17 437.05,126.85 438.05,126.80 439.05,126.27 440.05,126.49 441.05,126.51 442.05,126.32 443.05,126.80 444.05,127.28 445.05,127.76 446.05,127.74 447.05,128.03 448.05,128.41 449.05,128.95 450.05,129.59 451.05,130.04 452.05,130.69 453.05,131.37 454.05,132.01 455.05,132.72 456.05,133.18 457.05,134.10 458.05,135.47 459.05,137.48 460.05,140.03 461.05,142.02 462.05,144.68 463.05,147.07 464.05,149.36 465.05,151.61 466.05,153.94 467.05,156.41 468.05,158.94 469.05,160.87 470.05,163.22 471.05,165.99 472.05,168.47 473.05,170.62 474.05,170.67 475.05,170.16 476.05,169.18 477.05,168.56 478.05,167.18 479.05,165.53 480.05,163.48 481.05,161.55 482.05,159.94 483.05,158.22 484.05,155.94 485.05,154.30 486.05,152.24 487.05,150.62 488.05,148.58 489.05,146.64 490.05,145.11 491.05,143.50 492.05,142.28 493.05,140.72 494.05,139.10 495.05,137.72 496.05,136.20 497.05,134.98 498.05,133.10 499.05,132.12 500.05,130.34 501.05,129.54 502.05,128.59 503.05,127.93 504.05,127.05 505.05,126.02 506.05,125.10 507.05,124.36 508.05,123.57 509.05,122.42 510.05,121.75 511.05,121.01 512.05,120.15 513.05,119.50 514.05,119.00 515.05,118.79 516.05,118.26 517.05,117.92 518.05,117.36 519.05,116.49 520.05,115.95 521.05,115.49 522.05,114.94 523.05,114.91 524.05,114.81 525.05,114.63 526.05,114.04 527.05,114.21 528.05,113.68 529.05,113.54 530.05,113.53 531.05,112.94 532.05,112.75 533.05,112.99 534.05,112.47 535.05,112.30 536.05,112.24" fill="none" stroke="#3aa84a" stroke-width="1.0" stroke-linejoin="round" />
<polyline points="116.05,111.34 117.05,111.19 118.05,111.28 119.05,111.06 120.05,110.93 121.05,111.06 122.05,111.29 123.05,111.14 124.05,111.05 125.05,110.64 126.05,110.76 127.05,110.68 128.05,110.81 129.05,110.97 130.05,111.24 131.05,111.87 132.05,112.01 133.05,112.19 134.05,112.39 135.05,112.23 136.05,112.50 137.05,112.89 138.05,113.24 139.05,113.69 140.05,114.08 141.05,113.98 142.05,114.66 143.05,115.07 144.05,115.34 145.05,115.52 146.05,116.07 147.05,116.21 148.05,117.09 149.05,117.68 150.05,118.32 151.05,119.01 152.05,120.21 153.05,120.85 154.05,121.87 155.05,122.69 156.05,123.32 157.05,124.30 158.05,125.91 159.05,127.30 160.05,128.64 161.05,130.22 162.05,132.02 163.05,133.06 164.05,134.56 165.05,136.41 166.05,137.96 167.05,139.87 168.05,141.58 169.05,143.26 170.05,145.41 171.05,146.54 172.05,148.16 173.05,149.52 174.05,151.27 175.05,152.55 176.05,154.01 177.05,154.25 178.05,153.99 179.05,154.14 180.05,154.34 181.05,152.44 182.05,150.93 183.05,149.54 184.05,148.37 185.05,146.79 186.05,144.93 187.05,143.19 188.05,141.30 189.05,139.68 190.05,137.63 191.05,136.22 192.05,134.55 193.05,133.01 194.05,131.48 195.05,130.23 196.05,128.27 197.05,127.04 198.05,126.06 199.05,124.55 200.05,123.20 201.05,122.52 202.05,121.32 203.05,120.44 204.05,119.13 205.05,118.21 206.05,118.37 207.05,118.18 208.05,118.33 209.05,118.68 210.05,118.30 211.05,118.11 212.05,118.13 213.05,118.20 214.05,118.57 215.05,118.22 216.05,118.01 217.05,117.73 218.05,118.09 219.05,117.59 220.05,117.29 221.05,117.03 222.05,116.86 223.05,116.99 224.05,118.04 225.05,118.47 226.05,119.15 227.05,120.16 228.05,120.76 229.05,123.30 230.05,125.30 231.05,128.08 232.05,130.76 233.05,133.07 234.05,136.17 235.05,139.11 236.05,142.21 237.05,145.56 238.05,148.58 239.05,152.05 240.05,154.00 241.05,156.14 242.05,157.86 243.05,159.42 244.05,160.89 245.05,162.35 246.05,162.67 247.05,162.97 248.05,163.31 249.05,163.82 250.05,162.37 251.05,161.30 252.05,160.82 253.05,159.53 254.05,157.60 255.05,155.06 256.05,153.17 257.05,150.83 258.05,148.72 259.05,146.51 260.05,144.22 261.05,142.14 262.05,140.37 263.05,138.92 264.05,137.10 265.05,135.27 266.05,133.08 267.05,131.43 268.05,129.67 269.05,128.34 270.05,127.24 271.05,125.87 272.05,124.74 273.05,123.56 274.05,122.10 275.05,121.32 276.05,120.72 277.05,119.57 278.05,119.48 279.05,118.86 280.05,118.06 281.05,117.06 282.05,116.95 283.05,115.86 284.05,115.75 285.05,114.94 286.05,113.97 287.05,113.70 288.05,113.65 289.05,113.27 290.05,113.05 291.05,112.82 292.05,112.06 293.05,111.60 294.05,111.82 295.05,110.94 296.05,111.13 297.05,110.34 298.05,110.42 299.05,110.07 300.05,109.79 301.05,109.26 302.05,109.13 303.05,108.41 304.05,108.39 305.05,107.88 306.05,107.91 307.05,107.54 308.05,107.06 309.05,106.79 310.05,106.19 311.05,105.89 312.05,105.92 313.05,105.56 314.05,105.48 315.05,105.03 316.05,104.44 317.05,104.35 318.05,104.39 319.05,104.03 320.05,103.52 321.05,103.81 322.05,103.59 323.05,102.94 324.05,103.01 325.05,102.70 326.05,102.74 327.05,102.25 328.05,101.99 329.05,101.94 330.05,102.02 331.05,101.29 332.05,101.09 333.05,101.19 334.05,101.14 335.05,100.72 336.05,100.47 337.05,100.52 338.05,100.28 339.05,99.65 340.05,99.94 341.05,99.33 342.05,99.19 343.05,99.31 344.05,98.86 345.05,98.89 346.05,98.31 347.05,98.53 348.05,97.92 349.05,98.08 350.05,98.48 351.05,98.58 352.05,98.90 353.05,99.32 354.05,99.40 355.05,99.17 356.05,100.41 357.05,101.75 358.05,102.91 359.05,104.25 360.05,105.31 361.05,106.27 362.05,107.57 363.05,109.11 364.05,109.98 365.05,111.40 366.05,112.71 367.05,113.66 368.05,114.87 369.05,116.00 370.05,116.99 371.05,118.82 372.05,120.37 373.05,122.45 374.05,123.90 375.05,126.06 376.05,127.83 377.05,129.54 378.05,131.26 379.05,132.89 380.05,136.61 381.05,139.78 382.05,143.37 383.05,146.47 384.05,149.85 385.05,153.30 386.05,157.11 387.05,161.98 388.05,167.75 389.05,172.78 390.05,178.24 391.05,183.44 392.05,181.92 393.05,179.54 394.05,177.67 395.05,175.42 396.05,171.99 397.05,169.30 398.05,166.13 399.05,163.14 400.05,159.99 401.05,157.02 402.05,154.60 403.05,151.56 404.05,148.87 405.05,146.19 406.05,143.60 407.05,140.45 408.05,138.02 409.05,135.29 410.05,132.66 411.05,130.20 412.05,128.11 413.05,126.63 414.05,124.51 415.05,123.22 416.05,121.63 417.05,120.07 418.05,118.38 419.05,117.62 420.05,116.81 421.05,116.68 422.05,115.87 423.05,115.48 424.05,115.16 425.05,114.55 426.05,113.81 427.05,113.26 428.05,112.82 429.05,112.50 430.05,112.27 431.05,111.83 432.05,111.16 433.05,110.78 434.05,110.66 435.05,109.96 436.05,109.67 437.05,109.05 438.05,108.78 439.05,108.62 440.05,108.33 441.05,108.00 442.05,108.05 443.05,108.59 444.05,108.60 445.05,108.51 446.05,108.66 447.05,109.40 448.05,109.65 449.05,110.82 450.05,111.84 451.05,112.87 452.05,113.94 453.05,115.25 454.05,116.44 455.05,118.13 456.05,120.62 457.05,123.06 458.05,125.19 459.05,127.75 460.05,130.30 461.05,133.65 462.05,136.70 463.05,140.59 464.05,144.05 465.05,147.48 466.05,151.25 467.05,153.67 468.05,156.55 469.05,159.04 470.05,161.73 471.05,164.41 472.05,166.89 473.05,166.77 474.05,166.74 475.05,167.30 476.05,166.87 477.05,165.51 478.05,163.58 479.05,161.79 480.05,159.93 481.05,158.29 482.05,156.43 483.05,154.52 484.05,152.68 485.05,151.02 486.05,149.29 487.05,147.45 488.05,145.67 489.05,143.72 490.05,142.39 491.05,140.43 492.05,138.44 493.05,136.75 494.05,135.44 495.05,133.72 496.05,132.68 497.05,131.73 498.05,130.71 499.05,129.27 500.05,128.18 501.05,127.07 502.05,125.71 503.05,125.09 504.05,123.46 505.05,122.89 506.05,121.56 507.05,121.06 508.05,120.97 509.05,120.45 510.05,119.59 511.05,119.28 512.05,118.73 513.05,118.37 514.05,117.55 515.05,117.43 516.05,117.03 517.05,116.35 518.05,115.98 519.05,115.49 520.05,114.65 521.05,114.43 522.05,113.93 523.05,113.28 524.05,112.49 525.05,112.30 526.05,111.97 527.05,111.11 528.05,110.81 529.05,111.10 530.05,111.09 531.05,110.91 532.05,111.44 533.05,111.38 534.05,111.91 535.05,111.96 536.05,111.91" fill="none" stroke="#b83634" stroke-width="1.0" stroke-linejoin="round" />
<polyline points="115.50,323.32 116.33,321.46 117.17,302.93 118.00,305.38 118.84,329.72 119.67,316.88 120.51,317.95 121.34,335.27 122.18,321.81 123.01,308.14 123.85,314.52 124.68,302.93 125.52,314.75 126.35,317.04 127.19,308.41 128.02,312.43 128.86,324.65 129.69,312.92 130.52,323.91 131.36,309.80 132.19,323.23 133.03,316.25 133.86,324.77 134.70,316.44 135.53,299.99 136.37,345.56 137.20,323.72 138.04,328.94 138.87,313.65 139.71,303.42 140.54,324.69 141.38,313.80 142.21,328.12 143.05,312.93 143.88,310.90 144.71,318.76 145.55,323.06 146.38,319.99 147.22,312.28 148.05,318.16 148.89,313.42 149.72,331.84 150.56,318.43 151.39,318.14 152.23,318.42 153.06,317.62 153.90,315.19 154.73,313.66 155.57,319.67 156.40,323.25 157.24,320.06 158.07,320.46 158.90,322.10 159.74,319.07 160.57,320.22 161.41,316.35 162.24,319.91 163.08,321.18 163.91,318.48 164.75,319.08 165.58,317.77 166.42,318.83 167.25,316.27 168.09,317.05 168.92,311.54 169.76,307.95 170.59,303.61 171.42,300.60 172.26,293.49 173.09,293.67 173.93,291.44 174.76,291.52 175.60,291.76 176.43,294.30 177.27,291.62 178.10,294.91 178.94,295.28 179.77,296.53 180.61,292.93 181.44,295.10 182.28,293.85 183.11,292.41 183.95,296.28 184.78,297.43 185.61,299.46 186.45,304.33 187.28,310.90 188.12,314.19 188.95,315.24 189.79,312.89 190.62,316.49 191.46,316.27 192.29,314.50 193.13,315.50 193.96,317.63 194.80,319.98 195.63,316.59 196.47,317.28 197.30,318.62 198.14,319.01 198.97,321.36 199.80,321.59 200.64,321.14 201.47,317.98 202.31,318.11 203.14,319.91 203.98,318.92 204.81,315.61 205.65,320.71 206.48,319.15 207.32,320.66 208.15,314.31 208.99,318.94 209.82,315.32 210.66,316.59 211.49,319.33 212.33,316.76 213.16,317.56 213.99,316.96 214.83,317.48 215.66,316.58 216.50,316.61 217.33,319.26 218.17,316.20 219.00,319.21 219.84,320.20 220.67,318.34 221.51,319.30 222.34,318.83 223.18,319.61 224.01,315.74 224.85,315.64 225.68,318.59 226.52,314.64 227.35,317.41 228.18,318.68 229.02,319.17 229.85,316.29 230.69,315.93 231.52,314.12 232.36,310.47 233.19,310.54 234.03,310.36 234.86,310.15 235.70,307.97 236.53,305.61 237.37,302.63 238.20,301.63 239.04,295.98 239.87,294.59 240.70,287.83 241.54,288.99 242.37,287.59 243.21,288.29 244.04,289.62 244.88,288.44 245.71,289.21 246.55,289.16 247.38,288.76 248.22,291.04 249.05,287.05 249.89,288.04 250.72,288.89 251.56,287.05 252.39,278.92 253.23,294.11 254.06,309.79 254.89,298.91 255.73,301.15 256.56,304.91 257.40,307.71 258.23,312.21 259.07,315.26 259.90,317.80 260.74,318.45 261.57,316.02 262.41,318.04 263.24,318.37 264.08,318.73 264.91,318.13 265.75,319.39 266.58,321.43 267.42,321.03 268.25,322.36 269.08,319.56 269.92,318.94 270.75,318.31 271.59,317.13 272.42,319.95 273.26,322.96 274.09,320.36 274.93,319.19 275.76,322.54 276.60,321.37 277.43,321.13 278.27,315.56 279.10,317.20 279.94,320.41 280.77,320.02 281.61,318.99 282.44,318.71 283.27,318.77 284.11,321.23 284.94,320.89 285.78,316.71 286.61,319.20 287.45,317.31 288.28,319.17 289.12,318.69 289.95,318.64 290.79,319.62 291.62,316.99 292.46,317.62 293.29,319.23 294.13,318.84 294.96,316.28 295.80,320.82 296.63,317.65 297.46,317.09 298.30,312.24 299.13,316.51 299.97,320.54 300.80,317.64 301.64,319.72 302.47,317.63 303.31,318.80 304.14,317.51 304.98,320.29 305.81,318.79 306.65,318.14 307.48,318.13 308.32,317.47 309.15,315.83 309.99,320.75 310.82,318.96 311.65,322.06 312.49,317.99 313.32,316.25 314.16,318.75 314.99,316.97 315.83,315.46 316.66,318.32 317.50,317.47 318.33,317.39 319.17,320.43 320.00,321.26 320.84,319.80 321.67,320.64 322.51,318.01 323.34,322.98 324.17,322.75 325.01,322.40 325.84,318.75 326.68,320.17 327.51,319.91 328.35,320.61 329.18,321.10 330.02,322.30 330.85,318.38 331.69,320.04 332.52,318.00 333.36,319.49 334.19,318.84 335.03,319.00 335.86,311.01 336.70,310.97 337.53,314.64 338.36,326.62 339.20,316.77 340.03,313.59 340.87,317.33 341.70,325.16 342.54,320.38 343.37,310.48 344.21,328.90 345.04,325.00 345.88,319.95 346.71,315.25 347.55,318.87 348.38,323.82 349.22,327.72 350.05,318.43 350.89,325.91 351.72,317.24 352.55,316.79 353.39,318.40 354.22,319.17 355.06,319.38 355.89,319.63 356.73,320.62 357.56,321.03 358.40,321.04 359.23,316.02 360.07,315.54 360.90,319.05 361.74,318.04 362.57,319.77 363.41,318.85 364.24,316.43 365.08,317.13 365.91,317.10 366.74,317.69 367.58,317.48 368.41,320.52 369.25,317.65 370.08,322.49 370.92,318.70 371.75,318.43 372.59,318.26 373.42,322.94 374.26,317.23 375.09,321.58 375.93,323.41 376.76,319.41 377.60,319.31 378.43,322.42 379.27,318.54 380.10,319.45 380.93,318.85 381.77,319.68 382.60,315.61 383.44,315.64 384.27,315.11 385.11,315.48 385.94,313.83 386.78,312.17 387.61,313.46 388.45,310.93 389.28,306.84 390.12,307.92 390.95,306.75 391.79,306.30 392.62,303.47 393.46,302.21 394.29,302.32 395.12,302.76 395.96,301.60 396.79,301.78 397.63,303.97 398.46,303.47 399.30,303.92 400.13,303.99 400.97,307.06 401.80,310.50 402.64,311.77 403.47,314.84 404.31,316.64 405.14,316.78 405.98,317.55 406.81,319.03 407.64,318.38 408.48,318.05 409.31,318.31 410.15,319.78 410.98,319.83 411.82,322.90 412.65,319.01 413.49,315.59 414.32,320.40 415.16,316.36 415.99,320.53 416.83,319.90 417.66,317.05 418.50,320.89 419.33,320.07 420.17,317.01 421.00,319.50 421.83,317.71 422.67,315.22 423.50,320.91 424.34,316.95 425.17,315.81 426.01,319.16 426.84,319.36 427.68,317.63 428.51,317.91 429.35,316.37 430.18,321.43 431.02,319.11 431.85,317.18 432.69,318.02 433.52,319.65 434.36,317.65 435.19,317.98 436.02,320.61 436.86,322.35 437.69,318.91 438.53,319.29 439.36,318.68 440.20,318.27 441.03,320.58 441.87,320.12 442.70,316.95 443.54,320.24 444.37,321.12 445.21,320.88 446.04,318.05 446.88,315.51 447.71,316.99 448.55,321.61 449.38,318.88 450.21,320.16 451.05,317.51 451.88,318.55 452.72,319.34 453.55,320.26 454.39,316.73 455.22,321.65 456.06,319.77 456.89,321.02 457.73,317.22 458.56,316.50 459.40,318.14 460.23,317.27 461.07,318.97 461.90,321.60 462.74,318.78 463.57,315.49 464.40,319.89 465.24,317.44 466.07,321.64 466.91,318.07 467.74,311.38 468.58,290.68 469.41,296.84 470.25,295.76 471.08,298.78 471.92,297.63 472.75,300.11 473.59,302.26 474.42,303.27 475.26,306.84 476.09,307.16 476.93,304.37 477.76,302.06 478.59,297.01 479.43,295.82 480.26,293.23 481.10,299.33 481.93,299.92 482.77,301.06 483.60,305.02 484.44,304.18 485.27,307.00 486.11,308.25 486.94,316.73 487.78,318.12 488.61,316.83 489.45,318.18 490.28,316.10 491.12,318.90 491.95,317.20 492.78,317.18 493.62,314.29 494.45,314.85 495.29,315.98 496.12,314.52 496.96,314.73 497.79,316.51 498.63,312.52 499.46,314.27 500.30,312.97 501.13,312.46 501.97,311.82 502.80,315.32 503.64,316.87 504.47,317.96 505.30,318.04 506.14,317.50 506.97,318.00 507.81,324.03 508.64,335.19 509.48,304.40 510.31,301.52 511.15,308.19 511.98,312.88 512.82,299.50 513.65,304.30 514.49,335.21 515.32,304.48 516.16,326.38 516.99,306.89 517.83,328.56 518.66,323.94 519.49,341.67 520.33,326.00 521.16,310.94 522.00,315.00 522.83,363.20 523.67,317.07 524.50,306.29 525.34,308.48 526.17,310.21 527.01,304.89 527.84,301.46 528.68,296.74 529.51,305.21 530.35,349.28 531.18,347.14 532.02,312.51 532.85,311.08 533.68,328.57 534.52,288.92 535.35,323.38 536.19,306.51 537.02,299.97 537.86,326.38" fill="none" stroke="#3cc050" stroke-width="0.9" stroke-linejoin="round" />
<polyline points="115.50,318.18 116.33,329.63 117.17,323.21 118.00,316.47 118.84,327.72 119.67,335.27 120.51,331.99 121.34,312.81 122.18,310.33 123.01,317.08 123.85,316.53 124.68,310.91 125.52,330.17 126.35,328.41 127.19,333.76 128.02,321.23 128.86,320.89 129.69,315.69 130.52,330.47 131.36,316.55 132.19,319.63 133.03,321.04 133.86,319.05 134.70,313.47 135.53,333.49 136.37,316.50 137.20,319.40 138.04,316.87 138.87,307.21 139.71,308.32 140.54,318.83 141.38,321.15 142.21,319.41 143.05,314.53 143.88,347.52 144.71,321.03 145.55,316.93 146.38,316.86 147.22,318.35 148.05,321.93 148.89,315.34 149.72,319.49 150.56,320.79 151.39,321.43 152.23,321.41 153.06,310.57 153.90,315.81 154.73,319.15 155.57,319.99 156.40,317.87 157.24,318.61 158.07,317.74 158.90,321.00 159.74,319.35 160.57,319.60 161.41,318.40 162.24,320.38 163.08,319.57 163.91,321.33 164.75,315.87 165.58,319.32 166.42,319.23 167.25,315.87 168.09,317.28 168.92,314.90 169.76,306.19 170.59,302.12 171.42,298.50 172.26,294.88 173.09,291.42 173.93,294.43 174.76,295.35 175.60,292.96 176.43,290.43 177.27,291.13 178.10,292.62 178.94,292.63 179.77,292.68 180.61,294.63 181.44,294.92 182.28,292.05 183.11,290.94 183.95,293.92 184.78,297.21 185.61,299.36 186.45,304.82 187.28,309.28 188.12,315.45 188.95,319.00 189.79,318.71 190.62,315.15 191.46,317.49 192.29,315.77 193.13,319.93 193.96,317.09 194.80,318.91 195.63,321.12 196.47,323.63 197.30,317.95 198.14,315.63 198.97,315.19 199.80,317.89 200.64,318.54 201.47,322.09 202.31,318.12 203.14,320.64 203.98,320.17 204.81,321.32 205.65,319.32 206.48,319.06 207.32,322.25 208.15,317.11 208.99,317.87 209.82,314.48 210.66,315.12 211.49,317.73 212.33,314.11 213.16,319.55 213.99,323.92 214.83,318.16 215.66,319.10 216.50,321.13 217.33,322.03 218.17,313.53 219.00,320.84 219.84,319.01 220.67,318.79 221.51,316.36 222.34,316.08 223.18,313.78 224.01,322.39 224.85,318.58 225.68,320.11 226.52,316.41 227.35,319.38 228.18,317.99 229.02,313.13 229.85,318.14 230.69,316.26 231.52,313.15 232.36,311.50 233.19,314.10 234.03,311.03 234.86,311.18 235.70,307.11 236.53,305.72 237.37,302.78 238.20,297.96 239.04,294.09 239.87,292.05 240.70,291.48 241.54,288.38 242.37,289.37 243.21,284.98 244.04,287.60 244.88,288.96 245.71,286.96 246.55,284.69 247.38,287.88 248.22,288.65 249.05,286.79 249.89,286.25 250.72,286.04 251.56,284.36 252.39,288.48 253.23,289.30 254.06,294.32 254.89,299.17 255.73,300.87 256.56,303.24 257.40,306.71 258.23,311.16 259.07,314.00 259.90,319.10 260.74,316.80 261.57,318.79 262.41,318.81 263.24,321.88 264.08,318.39 264.91,318.25 265.75,315.70 266.58,318.01 267.42,321.86 268.25,316.03 269.08,317.52 269.92,317.51 270.75,321.40 271.59,319.90 272.42,319.83 273.26,321.10 274.09,319.08 274.93,323.15 275.76,322.75 276.60,316.86 277.43,322.62 278.27,314.03 279.10,319.22 279.94,321.35 280.77,316.83 281.61,322.21 282.44,316.26 283.27,322.36 284.11,316.15 284.94,320.87 285.78,321.60 286.61,315.39 287.45,316.10 288.28,320.59 289.12,309.79 289.95,322.76 290.79,320.01 291.62,317.51 292.46,338.70 293.29,320.26 294.13,323.58 294.96,317.55 295.80,321.24 296.63,317.11 297.46,315.52 298.30,319.89 299.13,320.84 299.97,319.55 300.80,319.12 301.64,321.73 302.47,320.53 303.31,325.14 304.14,318.15 304.98,320.79 305.81,315.44 306.65,320.86 307.48,318.73 308.32,318.37 309.15,319.05 309.99,315.46 310.82,319.36 311.65,319.08 312.49,318.13 313.32,319.42 314.16,317.40 314.99,321.83 315.83,317.58 316.66,323.86 317.50,319.99 318.33,321.62 319.17,320.94 320.00,319.32 320.84,319.15 321.67,318.52 322.51,323.01 323.34,314.67 324.17,319.29 325.01,320.07 325.84,320.71 326.68,315.59 327.51,323.74 328.35,319.77 329.18,317.75 330.02,321.31 330.85,322.70 331.69,323.47 332.52,316.86 333.36,318.87 334.19,315.10 335.03,315.43 335.86,313.99 336.70,325.39 337.53,316.50 338.36,323.30 339.20,323.33 340.03,323.04 340.87,320.46 341.70,314.80 342.54,316.77 343.37,316.46 344.21,325.64 345.04,305.38 345.88,317.96 346.71,314.71 347.55,317.80 348.38,302.93 349.22,324.31 350.05,343.60 350.89,327.72 351.72,319.99 352.55,321.82 353.39,318.68 354.22,318.37 355.06,319.82 355.89,318.97 356.73,320.14 357.56,316.67 358.40,321.35 359.23,318.35 360.07,322.91 360.90,318.31 361.74,318.87 362.57,319.73 363.41,318.74 364.24,318.06 365.08,307.34 365.91,318.75 366.74,315.97 367.58,316.07 368.41,316.65 369.25,320.55 370.08,317.15 370.92,318.71 371.75,319.75 372.59,319.16 373.42,317.18 374.26,319.53 375.09,320.67 375.93,320.28 376.76,318.47 377.60,320.83 378.43,320.18 379.27,319.23 380.10,319.27 380.93,322.01 381.77,319.12 382.60,316.87 383.44,314.94 384.27,314.98 385.11,315.00 385.94,314.77 386.78,312.44 387.61,310.78 388.45,309.36 389.28,308.96 390.12,310.65 390.95,307.74 391.79,304.86 392.62,305.05 393.46,305.01 394.29,304.17 395.12,304.25 395.96,303.66 396.79,303.02 397.63,305.80 398.46,305.11 399.30,304.69 400.13,306.29 400.97,307.23 401.80,309.52 402.64,289.70 403.47,313.17 404.31,315.81 405.14,319.02 405.98,317.64 406.81,321.14 407.64,317.39 408.48,321.24 409.31,315.20 410.15,320.58 410.98,318.98 411.82,319.90 412.65,319.38 413.49,319.66 414.32,321.07 415.16,320.69 415.99,317.35 416.83,316.80 417.66,320.16 418.50,316.42 419.33,320.04 420.17,319.95 421.00,321.72 421.83,318.58 422.67,314.00 423.50,305.38 424.34,319.42 425.17,338.70 426.01,321.25 426.84,318.51 427.68,314.32 428.51,320.79 429.35,316.99 430.18,314.78 431.02,316.39 431.85,323.42 432.69,319.49 433.52,318.87 434.36,319.64 435.19,320.64 436.02,319.34 436.86,320.34 437.69,320.13 438.53,319.56 439.36,320.67 440.20,320.10 441.03,314.48 441.87,317.31 442.70,319.05 443.54,322.78 444.37,320.60 445.21,316.99 446.04,320.76 446.88,319.84 447.71,319.59 448.55,320.21 449.38,317.95 450.21,317.26 451.05,322.53 451.88,319.24 452.72,319.93 453.55,322.33 454.39,323.74 455.22,316.90 456.06,322.00 456.89,319.62 457.73,318.27 458.56,314.98 459.40,314.73 460.23,317.67 461.07,323.61 461.90,324.71 462.74,317.32 463.57,321.59 464.40,320.05 465.24,321.44 466.07,320.88 466.91,313.51 467.74,318.43 468.58,240.70 469.41,294.24 470.25,295.18 471.08,295.89 471.92,300.59 472.75,300.69 473.59,304.44 474.42,303.30 475.26,304.62 476.09,306.43 476.93,302.50 477.76,298.50 478.59,298.03 479.43,296.29 480.26,297.79 481.10,294.80 481.93,297.78 482.77,305.46 483.60,302.52 484.44,305.71 485.27,310.82 486.11,315.67 486.94,319.17 487.78,318.93 488.61,319.13 489.45,317.00 490.28,315.80 491.12,318.54 491.95,312.64 492.78,316.68 493.62,313.18 494.45,313.45 495.29,314.46 496.12,317.35 496.96,312.46 497.79,316.42 498.63,312.96 499.46,314.27 500.30,318.33 501.13,314.17 501.97,315.07 502.80,315.47 503.64,317.90 504.47,316.56 505.30,315.75 506.14,318.05 506.97,299.57 507.81,310.95 508.64,341.22 509.48,357.32 510.31,330.10 511.15,335.52 511.98,327.59 512.82,322.60 513.65,295.67 514.49,294.35 515.32,338.40 516.16,340.43 516.99,320.96 517.83,304.40 518.66,323.08 519.49,329.43 520.33,242.66 521.16,294.05 522.00,363.20 522.83,301.87 523.67,319.41 524.50,310.10 525.34,347.09 526.17,306.38 527.01,315.09 527.84,337.48 528.68,323.77 529.51,310.73 530.35,338.70 531.18,321.65 532.02,315.22 532.85,322.29 533.68,342.36 534.52,299.56 535.35,325.04 536.19,312.95 537.02,338.37 537.86,316.54" fill="none" stroke="#d84030" stroke-width="0.9" stroke-linejoin="round" />
<polyline points="115.50,442.91 116.48,446.06 117.46,447.33 118.45,451.21 119.43,457.49 120.41,456.36 121.39,455.80 122.37,451.48 123.36,445.82 124.34,462.38 125.32,464.67 126.30,454.75 127.28,452.15 128.27,447.84 129.25,457.33 130.23,462.52 131.21,452.29 132.19,451.33 133.18,453.44 134.16,453.27 135.14,459.64 136.12,457.42 137.10,467.58 138.09,448.57 139.07,466.33 140.05,463.73 141.03,459.94 142.01,462.96 143.00,452.08 143.98,466.67 144.96,474.47 145.94,473.44 146.92,466.41 147.91,472.47 148.89,467.78 149.87,485.42 150.85,475.74 151.83,461.30 152.82,479.16 153.80,465.39 154.78,476.82 155.76,472.93 156.74,473.95 157.73,480.90 158.71,481.22 159.69,476.93 160.67,489.07 161.65,485.43 162.64,479.52 163.62,485.62 164.60,489.74 165.58,489.45 166.56,487.14 167.55,492.31 168.53,509.87 169.51,490.16 170.49,479.56 171.47,494.51 172.46,464.44 173.44,475.94 174.42,478.46 175.40,469.15 176.38,466.61 177.37,443.10 178.35,468.58 179.33,451.24 180.31,449.19 181.29,444.30 182.28,460.87 183.26,449.78 184.24,447.06 185.22,438.14 186.20,456.28 187.19,426.70 188.17,436.08 189.15,428.32 190.13,436.93 191.11,439.22 192.10,438.60 193.08,433.04 194.06,433.12 195.04,438.15 196.02,430.40 197.01,430.18 197.99,435.72 198.97,454.42 199.95,441.77 200.93,456.62 201.92,446.09 202.90,447.35 203.88,453.26 204.86,461.71 205.84,456.88 206.83,460.92 207.81,469.82 208.79,455.79 209.77,460.31 210.75,447.20 211.74,469.94 212.72,450.93 213.70,446.94 214.68,456.89 215.66,460.06 216.65,450.76 217.63,446.97 218.61,448.13 219.59,459.22 220.57,457.14 221.56,457.50 222.54,453.51 223.52,446.08 224.50,465.16 225.48,454.61 226.47,463.14 227.45,470.50 228.43,484.86 229.41,475.76 230.39,478.33 231.38,482.38 232.36,484.37 233.34,484.02 234.32,486.79 235.30,499.65 236.29,503.54 237.27,495.86 238.25,495.39 239.23,497.51 240.21,497.56 241.20,486.86 242.18,482.91 243.16,478.43 244.14,472.03 245.12,468.29 246.11,467.17 247.09,445.18 248.07,465.88 249.05,453.95 250.03,449.99 251.02,436.75 252.00,431.99 252.98,459.75 253.96,441.43 254.94,435.96 255.93,442.20 256.91,440.97 257.89,443.58 258.87,440.70 259.85,436.98 260.84,449.90 261.82,422.83 262.80,407.80 263.78,440.10 264.76,437.13 265.75,425.65 266.73,440.12 267.71,424.89 268.69,416.87 269.67,438.20 270.66,431.05 271.64,440.05 272.62,439.07 273.60,452.49 274.58,459.61 275.57,448.15 276.55,443.06 277.53,454.16 278.51,453.72 279.49,449.92 280.48,457.63 281.46,456.17 282.44,469.91 283.42,459.99 284.40,450.00 285.39,456.17 286.37,449.43 287.35,443.00 288.33,450.29 289.31,449.09 290.30,452.17 291.28,443.85 292.26,458.27 293.24,452.75 294.22,444.71 295.21,446.50 296.19,449.51 297.17,446.97 298.15,435.45 299.13,464.48 300.12,437.58 301.10,450.78 302.08,461.09 303.06,468.70 304.04,454.15 305.03,458.01 306.01,461.01 306.99,453.72 307.97,453.63 308.95,460.16 309.94,464.76 310.92,456.69 311.90,457.29 312.88,459.41 313.86,446.13 314.85,457.56 315.83,452.38 316.81,447.96 317.79,458.56 318.77,454.64 319.76,450.30 320.74,461.21 321.72,447.78 322.70,448.02 323.68,462.09 324.67,465.04 325.65,455.25 326.63,457.25 327.61,454.62 328.59,465.14 329.58,453.96 330.56,463.99 331.54,445.80 332.52,457.86 333.50,472.28 334.49,457.05 335.47,466.93 336.45,461.35 337.43,459.35 338.41,472.11 339.40,457.21 340.38,462.69 341.36,457.97 342.34,451.59 343.32,464.93 344.31,467.09 345.29,450.43 346.27,460.61 347.25,451.74 348.23,466.48 349.22,447.87 350.20,449.26 351.18,489.47 352.16,456.92 353.14,455.12 354.13,435.93 355.11,464.32 356.09,469.91 357.07,470.31 358.05,489.40 359.04,475.31 360.02,471.41 361.00,472.32 361.98,486.86 362.96,483.01 363.95,475.79 364.93,478.70 365.91,480.42 366.89,469.35 367.87,481.97 368.86,483.20 369.84,475.71 370.82,494.00 371.80,480.41 372.78,481.34 373.77,477.07 374.75,479.99 375.73,482.76 376.71,497.63 377.69,491.53 378.68,495.08 379.66,483.34 380.64,492.09 381.62,495.99 382.60,494.66 383.59,510.50 384.57,508.23 385.55,500.41 386.53,497.56 387.51,509.09 388.50,511.50 389.48,481.35 390.46,456.74 391.44,437.37 392.42,440.03 393.41,417.76 394.39,429.85 395.37,433.43 396.35,440.10 397.33,426.70 398.32,421.85 399.30,424.67 400.28,420.56 401.26,420.73 402.24,424.48 403.23,436.08 404.21,446.48 405.19,436.35 406.17,432.39 407.15,409.15 408.14,431.56 409.12,415.43 410.10,423.18 411.08,419.41 412.06,434.87 413.05,419.81 414.03,443.18 415.01,418.77 415.99,428.95 416.97,411.43 417.96,424.44 418.94,415.59 419.92,450.75 420.90,413.11 421.88,433.33 422.87,432.51 423.85,451.67 424.83,447.91 425.81,443.56 426.79,457.37 427.78,456.75 428.76,451.00 429.74,427.91 430.72,445.07 431.70,429.06 432.69,461.90 433.67,443.62 434.65,455.02 435.63,464.18 436.61,448.27 437.60,473.41 438.58,461.47 439.56,459.78 440.54,468.23 441.52,470.17 442.51,466.84 443.49,474.16 444.47,467.03 445.45,479.90 446.43,476.61 447.42,482.67 448.40,494.45 449.38,482.41 450.36,490.28 451.34,508.69 452.33,495.76 453.31,500.16 454.29,500.78 455.27,482.16 456.25,497.02 457.24,485.69 458.22,500.63 459.20,492.64 460.18,486.71 461.16,507.47 462.15,494.74 463.13,497.55 464.11,506.68 465.09,497.52 466.07,493.47 467.06,496.32 468.04,478.45 469.02,493.86 470.00,478.57 470.98,487.99 471.97,474.13 472.95,457.78 473.93,465.39 474.91,454.86 475.89,458.25 476.88,451.46 477.86,444.89 478.84,439.95 479.82,446.99 480.80,445.61 481.79,457.19 482.77,436.72 483.75,443.07 484.73,450.64 485.71,437.92 486.70,428.90 487.68,429.74 488.66,439.45 489.64,441.93 490.62,436.94 491.61,434.86 492.59,441.24 493.57,444.28 494.55,452.76 495.53,436.86 496.52,450.99 497.50,428.46 498.48,439.33 499.46,430.13 500.44,442.59 501.43,434.83 502.41,441.99 503.39,444.34 504.37,448.19 505.35,451.02 506.34,444.95 507.32,442.36 508.30,446.26 509.28,471.18 510.26,420.50 511.25,472.14 512.23,496.73 513.21,496.73 514.19,398.72 515.17,507.62 516.16,450.01 517.14,444.39 518.12,474.80 519.10,478.10 520.08,422.11 521.07,471.20 522.05,451.46 523.03,430.56 524.01,452.89 524.99,423.05 525.98,470.10 526.96,444.38 527.94,436.05 528.92,480.29 529.90,453.06 530.89,437.08 531.87,429.10 532.85,462.68 533.83,416.87 534.81,447.11 535.80,461.11 536.78,450.13 537.76,454.70" fill="none" stroke="#d83a30" stroke-width="0.9" stroke-linejoin="round" />
<polyline points="115.50,434.58 116.48,447.82 117.46,443.90 118.45,435.89 119.43,447.53 120.41,455.47 121.39,461.61 122.37,455.19 123.36,466.19 124.34,448.04 125.32,452.96 126.30,461.33 127.28,467.75 128.27,460.05 129.25,460.28 130.23,459.39 131.21,464.29 132.19,451.96 133.18,445.16 134.16,464.43 135.14,460.91 136.12,463.77 137.10,453.34 138.09,460.68 139.07,461.86 140.05,456.64 141.03,472.85 142.01,469.45 143.00,467.41 143.98,477.69 144.96,468.23 145.94,441.37 146.92,466.96 147.91,450.92 148.89,456.24 149.87,470.24 150.85,454.61 151.83,471.62 152.82,463.34 153.80,482.67 154.78,470.53 155.76,486.97 156.74,467.27 157.73,468.14 158.71,486.36 159.69,472.24 160.67,475.04 161.65,488.68 162.64,485.68 163.62,475.68 164.60,475.74 165.58,497.24 166.56,471.16 167.55,489.28 168.53,486.50 169.51,493.58 170.49,473.90 171.47,460.87 172.46,456.78 173.44,466.34 174.42,471.55 175.40,469.47 176.38,456.29 177.37,449.13 178.35,449.53 179.33,450.07 180.31,447.23 181.29,444.72 182.28,444.19 183.26,432.05 184.24,427.45 185.22,438.71 186.20,444.30 187.19,443.62 188.17,438.97 189.15,440.09 190.13,436.64 191.11,426.47 192.10,428.32 193.08,444.87 194.06,419.55 195.04,428.67 196.02,434.59 197.01,433.86 197.99,440.96 198.97,444.56 199.95,456.72 200.93,471.32 201.92,463.29 202.90,454.24 203.88,462.34 204.86,452.76 205.84,466.98 206.83,454.34 207.81,463.79 208.79,450.94 209.77,457.48 210.75,447.76 211.74,447.50 212.72,450.82 213.70,459.11 214.68,454.58 215.66,458.29 216.65,445.28 217.63,464.70 218.61,452.87 219.59,454.18 220.57,439.39 221.56,443.18 222.54,439.40 223.52,458.73 224.50,452.69 225.48,469.59 226.47,446.57 227.45,471.04 228.43,484.37 229.41,462.55 230.39,474.98 231.38,477.20 232.36,483.55 233.34,482.59 234.32,493.70 235.30,497.47 236.29,485.38 237.27,508.28 238.25,498.47 239.23,496.36 240.21,481.37 241.20,481.88 242.18,479.43 243.16,463.37 244.14,468.45 245.12,460.42 246.11,458.25 247.09,457.04 248.07,453.08 249.05,468.67 250.03,437.77 251.02,447.45 252.00,448.62 252.98,428.51 253.96,444.08 254.94,437.95 255.93,442.68 256.91,438.86 257.89,430.91 258.87,435.64 259.85,446.48 260.84,437.27 261.82,416.99 262.80,427.76 263.78,445.07 264.76,446.14 265.75,425.56 266.73,444.80 267.71,435.90 268.69,429.04 269.67,434.30 270.66,430.28 271.64,436.80 272.62,435.26 273.60,447.29 274.58,456.14 275.57,447.49 276.55,465.05 277.53,460.19 278.51,454.75 279.49,466.65 280.48,459.12 281.46,473.13 282.44,460.38 283.42,468.78 284.40,464.23 285.39,460.21 286.37,457.00 287.35,462.86 288.33,458.85 289.31,468.76 290.30,442.65 291.28,457.96 292.26,459.21 293.24,462.58 294.22,451.17 295.21,442.73 296.19,468.18 297.17,455.76 298.15,459.16 299.13,457.96 300.12,452.85 301.10,455.36 302.08,452.56 303.06,452.31 304.04,467.80 305.03,449.48 306.01,446.41 306.99,455.28 307.97,457.27 308.95,446.46 309.94,458.66 310.92,454.41 311.90,457.33 312.88,459.63 313.86,454.07 314.85,462.97 315.83,449.09 316.81,450.14 317.79,467.50 318.77,473.57 319.76,456.05 320.74,453.43 321.72,451.42 322.70,459.56 323.68,463.78 324.67,463.74 325.65,446.63 326.63,457.96 327.61,454.96 328.59,461.33 329.58,454.34 330.56,465.21 331.54,455.90 332.52,467.61 333.50,451.80 334.49,450.89 335.47,460.53 336.45,460.02 337.43,459.63 338.41,451.15 339.40,471.94 340.38,452.88 341.36,446.60 342.34,460.71 343.32,464.97 344.31,472.73 345.29,450.36 346.27,464.42 347.25,449.96 348.23,455.21 349.22,458.07 350.20,446.39 351.18,460.00 352.16,454.41 353.14,461.28 354.13,463.40 355.11,476.92 356.09,463.53 357.07,468.82 358.05,478.68 359.04,486.63 360.02,475.74 361.00,473.42 361.98,468.75 362.96,470.48 363.95,492.31 364.93,477.79 365.91,483.44 366.89,483.41 367.87,490.33 368.86,473.60 369.84,474.58 370.82,490.46 371.80,487.56 372.78,471.59 373.77,479.04 374.75,484.21 375.73,466.46 376.71,481.40 377.69,476.47 378.68,490.75 379.66,480.88 380.64,486.44 381.62,473.11 382.60,494.24 383.59,492.08 384.57,492.71 385.55,474.51 386.53,484.07 387.51,486.77 388.50,494.44 389.48,471.63 390.46,457.76 391.44,431.61 392.42,441.55 393.41,421.10 394.39,445.78 395.37,438.33 396.35,428.45 397.33,439.36 398.32,424.64 399.30,430.04 400.28,430.26 401.26,432.31 402.24,429.09 403.23,432.34 404.21,423.46 405.19,448.12 406.17,437.94 407.15,434.95 408.14,429.72 409.12,439.17 410.10,462.77 411.08,436.04 412.06,452.85 413.05,435.18 414.03,449.60 415.01,448.34 415.99,444.59 416.97,438.34 417.96,454.10 418.94,435.06 419.92,464.21 420.90,437.48 421.88,452.99 422.87,452.59 423.85,459.42 424.83,430.71 425.81,439.63 426.79,448.91 427.78,456.37 428.76,449.83 429.74,448.52 430.72,473.92 431.70,455.54 432.69,443.75 433.67,454.13 434.65,438.38 435.63,443.20 436.61,454.57 437.60,442.24 438.58,447.55 439.56,467.05 440.54,461.99 441.52,459.03 442.51,462.07 443.49,444.91 444.47,466.38 445.45,460.87 446.43,450.73 447.42,477.59 448.40,465.52 449.38,468.65 450.36,469.47 451.34,461.39 452.33,459.05 453.31,467.31 454.29,468.80 455.27,474.87 456.25,466.93 457.24,480.50 458.22,485.62 459.20,472.85 460.18,476.50 461.16,480.54 462.15,485.94 463.13,487.95 464.11,484.94 465.09,491.84 466.07,474.51 467.06,502.98 468.04,478.59 469.02,470.93 470.00,472.23 470.98,478.78 471.97,470.57 472.95,465.47 473.93,466.58 474.91,465.88 475.89,463.37 476.88,442.75 477.86,442.38 478.84,449.68 479.82,428.07 480.80,437.44 481.79,444.48 482.77,433.53 483.75,442.34 484.73,448.23 485.71,436.19 486.70,442.68 487.68,449.17 488.66,433.15 489.64,441.22 490.62,437.77 491.61,442.77 492.59,443.79 493.57,439.69 494.55,433.57 495.53,424.26 496.52,436.19 497.50,425.69 498.48,445.35 499.46,448.49 500.44,451.32 501.43,442.40 502.41,444.48 503.39,435.60 504.37,449.27 505.35,458.33 506.34,440.42 507.32,441.36 508.30,491.87 509.28,462.36 510.26,430.88 511.25,435.51 512.23,460.24 513.21,479.52 514.19,445.11 515.17,449.71 516.16,452.26 517.14,387.83 518.12,443.48 519.10,437.17 520.08,477.05 521.07,431.96 522.05,443.39 523.03,484.03 524.01,445.75 524.99,431.64 525.98,435.61 526.96,496.73 527.94,477.86 528.92,448.68 529.90,417.00 530.89,475.89 531.87,465.75 532.85,464.98 533.83,481.90 534.81,461.62 535.80,452.73 536.78,467.29 537.76,460.69" fill="none" stroke="#40c050" stroke-width="0.9" stroke-linejoin="round" />
<polyline points="116.00,526.60 140.00,526.90 171.00,527.50 201.00,529.00 231.00,532.50 258.00,536.50 285.00,540.20 312.00,546.00 327.00,549.60 348.50,555.60 377.00,564.10 391.20,570.40 408.30,571.30 434.00,578.40 451.10,583.50 471.00,584.70 482.40,587.50 538.00,587.80" fill="none" stroke="#3cb050" stroke-width="1.0" stroke-linejoin="round" />
<line x1="327.30" y1="89.60" x2="327.30" y2="216.00" stroke="#34a044" stroke-width="1.0" />
<line x1="327.30" y1="228.80" x2="327.30" y2="364.30" stroke="#b85a34" stroke-width="1.0" />
<line x1="327.30" y1="376.60" x2="327.30" y2="512.00" stroke="#34a044" stroke-width="1.0" />
<line x1="327.30" y1="525.70" x2="327.30" y2="588.40" stroke="#34a044" stroke-width="1.0" />
<rect x="96.80" y="639.20" width="452.00" height="14.40" fill="#f0f0f0" />
<rect x="96.80" y="639.20" width="54.00" height="14.40" fill="#ffffff" />
<text x="103.70" y="650.30" font-size="7" fill="#1e1e1e" stroke="#1e1e1e" stroke-width="0.16" textLength="25.7" lengthAdjust="spacingAndGlyphs">Layout 1</text>
<rect x="132.90" y="642.80" width="8.70" height="8.60" fill="#e06a48" rx="1.2"/>
<line x1="135.30" y1="645.10" x2="139.20" y2="649.10" stroke="#fff" stroke-width="1.0" />
<line x1="139.20" y1="645.10" x2="135.30" y2="649.10" stroke="#fff" stroke-width="1.0" />
<text x="157.00" y="650.30" font-size="7" fill="#1e1e1e" stroke="#1e1e1e" stroke-width="0.16" textLength="27" lengthAdjust="spacingAndGlyphs">Layout 2</text>
<line x1="191.60" y1="639.50" x2="191.60" y2="653.00" stroke="#dadada" stroke-width="0.8" />
<text x="198.40" y="650.30" font-size="7" fill="#1e1e1e" stroke="#1e1e1e" stroke-width="0.16" textLength="41.6" lengthAdjust="spacingAndGlyphs">Neues Layout</text>
<rect x="1.00" y="654.00" width="798.00" height="17.00" fill="#f4f4f4" />
<rect x="2.80" y="659.00" width="8.10" height="8.50" fill="#30d040" stroke="#1a8a20" stroke-width="0.5"/>
<circle cx="20" cy="661" r="2.4" fill="#6a6a6a"/><path d="M16,667.5 q0,-4.5 4,-4.5 q4,0 4,4.5 z" fill="#6a6a6a"/>
<text x="28.10" y="666.60" font-size="7" fill="#1e1e1e" stroke="#1e1e1e" stroke-width="0.16" textLength="59.1" lengthAdjust="spacingAndGlyphs">Franz-Josef Neeka</text>
<text x="91.90" y="666.60" font-size="7" fill="#1e1e1e" stroke="#1e1e1e" stroke-width="0.16" textLength="25.3" lengthAdjust="spacingAndGlyphs">1:20.340</text>
<text x="121.00" y="666.60" font-size="7" fill="#d02020" textLength="20.6" lengthAdjust="spacingAndGlyphs">+1.920</text>
<rect x="143.00" y="659.00" width="8.10" height="8.50" fill="#e81818" stroke="#901010" stroke-width="0.5"/>
<circle cx="160.5" cy="661" r="2.4" fill="#6a6a6a"/><path d="M156.5,667.5 q0,-4.5 4,-4.5 q4,0 4,4.5 z" fill="#6a6a6a"/>
<text x="169.00" y="666.60" font-size="7" fill="#1e1e1e" stroke="#1e1e1e" stroke-width="0.16" textLength="55" lengthAdjust="spacingAndGlyphs">Franz-Josef Neek</text>
<text x="228.00" y="666.60" font-size="7.2" font-weight="bold" fill="#1e1e1e" textLength="29" lengthAdjust="spacingAndGlyphs">1:13.494</text>
<text x="261.00" y="666.60" font-size="7" fill="#1e1e1e" stroke="#1e1e1e" stroke-width="0.16" textLength="22" lengthAdjust="spacingAndGlyphs">+0.000</text>
<rect x="657.60" y="656.90" width="132.00" height="12.00" fill="#e6e6e6" stroke="#c8c8c8" stroke-width="0.6"/>
<path d="M661.5,662.5 L664.5,665.8 L670,659" fill="none" stroke="#58b020" stroke-width="2"/>
<text x="673.30" y="665.60" font-size="7" fill="#1e1e1e" stroke="#1e1e1e" stroke-width="0.16" textLength="110.5" lengthAdjust="spacingAndGlyphs">Synchronisiert vor circa 5 Minuten</text>
<rect x="0.5" y="0.5" width="799" height="671" fill="none" stroke="#6a7e7b" stroke-width="1"/>
</svg>
</body></html>
